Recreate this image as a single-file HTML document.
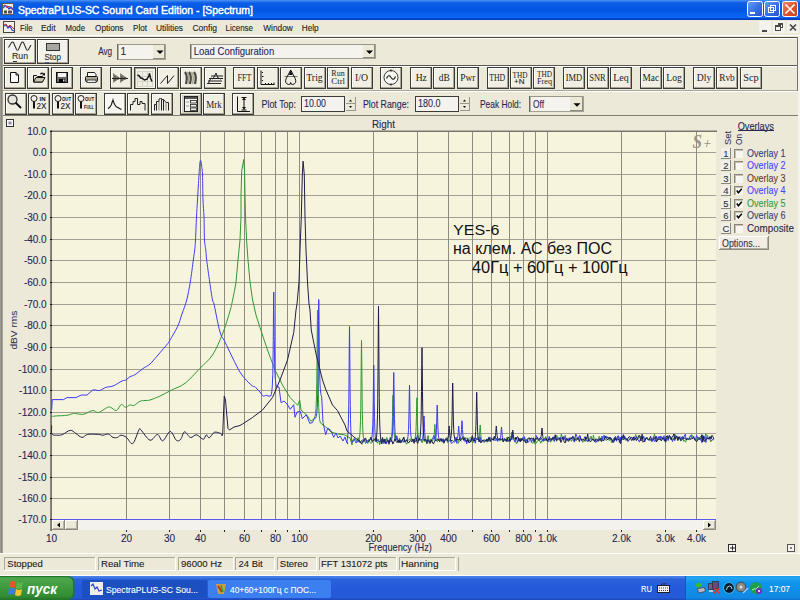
<!DOCTYPE html>
<html><head><meta charset="utf-8"><title>SpectraPLUS</title>
<style>html,body{margin:0;padding:0;width:800px;height:600px;overflow:hidden;background:#ECE9D8}svg{display:block}</style>
</head><body>
<svg width="800" height="600" viewBox="0 0 800 600" shape-rendering="auto">
<rect x="0" y="0" width="800" height="600" fill="#ECE9D8" />
<defs>
<linearGradient id="tg" x1="0" y1="0" x2="0" y2="20" gradientUnits="userSpaceOnUse">
<stop offset="0" stop-color="#4A95F5"/><stop offset="0.08" stop-color="#2A74EC"/>
<stop offset="0.15" stop-color="#0A5DE6"/><stop offset="0.55" stop-color="#0256E2"/>
<stop offset="0.7" stop-color="#0861EE"/><stop offset="0.88" stop-color="#0B66F3"/>
<stop offset="0.92" stop-color="#0047CF"/><stop offset="1" stop-color="#003BBE"/>
</linearGradient>
<linearGradient id="btnb" x1="0" y1="0" x2="1" y2="1">
<stop offset="0" stop-color="#6E9CF5"/><stop offset="0.5" stop-color="#3A72E8"/><stop offset="1" stop-color="#2152CC"/>
</linearGradient>
<linearGradient id="btnr" x1="0" y1="0" x2="1" y2="1">
<stop offset="0" stop-color="#F08A6E"/><stop offset="0.5" stop-color="#E0552E"/><stop offset="1" stop-color="#C5401E"/>
</linearGradient>
<linearGradient id="taskg" x1="0" y1="575" x2="0" y2="600" gradientUnits="userSpaceOnUse">
<stop offset="0" stop-color="#3D6ED8"/><stop offset="0.08" stop-color="#4A85EA"/><stop offset="0.16" stop-color="#2C62D9"/>
<stop offset="0.5" stop-color="#245ADB"/><stop offset="0.9" stop-color="#2459D8"/><stop offset="1" stop-color="#1D47B8"/>
</linearGradient>
<linearGradient id="trayg" x1="0" y1="575" x2="0" y2="600" gradientUnits="userSpaceOnUse">
<stop offset="0" stop-color="#1C8FE8"/><stop offset="0.12" stop-color="#23A7F3"/><stop offset="0.3" stop-color="#0F95EC"/>
<stop offset="0.9" stop-color="#1189E4"/><stop offset="1" stop-color="#0C6FCF"/>
</linearGradient>
<linearGradient id="startg" x1="0" y1="575" x2="0" y2="600" gradientUnits="userSpaceOnUse">
<stop offset="0" stop-color="#3A8A3A"/><stop offset="0.15" stop-color="#4FA64C"/><stop offset="0.5" stop-color="#3E9A3C"/>
<stop offset="0.85" stop-color="#338C33"/><stop offset="1" stop-color="#236E24"/>
</linearGradient>
</defs>
<rect x="0" y="0" width="800" height="20" fill="url(#tg)" />
<rect x="2" y="3" width="12" height="12" fill="#F4F2EA" />
<rect x="2.5" y="3.5" width="11" height="11" fill="none" stroke="#5A5A5A" stroke-width="1"/>
<polyline points="3,6 5,5 7,8 9,6 11,9 13,8" fill="none" stroke="#D03030" stroke-width="1"/>
<polyline points="3,8 5,6 7,6 9,9 11,7 13,10" fill="none" stroke="#3040E0" stroke-width="1.2"/>
<rect x="4" y="10.5" width="3" height="3" fill="#505050" />
<rect x="8" y="10.5" width="4" height="3" fill="#505050" />
<text x="18" y="14" font-family="Liberation Sans" font-size="11.3" fill="#FFFFFF" stroke="#FFFFFF" stroke-width="0.45" textLength="235" lengthAdjust="spacingAndGlyphs">SpectraPLUS-SC Sound Card Edition - [Spectrum]</text>
<rect x="747.5" y="1.5" width="15" height="15" rx="2" ry="2" fill="url(#btnb)" stroke="#FFFFFF" stroke-width="1"/>
<rect x="764.5" y="1.5" width="15" height="15" rx="2" ry="2" fill="url(#btnb)" stroke="#FFFFFF" stroke-width="1"/>
<rect x="782.5" y="1.5" width="15" height="15" rx="2" ry="2" fill="url(#btnr)" stroke="#FFFFFF" stroke-width="1"/>
<rect x="750" y="12" width="5" height="2" fill="#FFFFFF" />
<rect x="768.5" y="7.5" width="5" height="5" fill="none" stroke="#fff" stroke-width="1"/>
<rect x="770.5" y="5.5" width="5" height="5" fill="none" stroke="#fff" stroke-width="1"/>
<path d="M785.5,4.5 L794.5,13.5 M794.5,4.5 L785.5,13.5" stroke="#fff" stroke-width="1.6"/>
<rect x="3" y="21" width="12" height="12" fill="#F4F2EA" />
<rect x="3.5" y="21.5" width="11" height="11" fill="none" stroke="#444" stroke-width="1"/>
<polyline points="4,26 6,25 8,28 10,26 12,30 14,31" fill="none" stroke="#3040D0" stroke-width="1.2"/>
<polyline points="4,25 6,24 8,27 10,25 12,27 14,29" fill="none" stroke="#D03030" stroke-width="1"/>
<text x="20" y="30.5" font-family="Liberation Sans" font-size="9" fill="#202020" font-weight="normal" text-anchor="start" textLength="12.5" lengthAdjust="spacingAndGlyphs" stroke="#202020" stroke-width="0.1" >File</text>
<text x="41" y="30.5" font-family="Liberation Sans" font-size="9" fill="#202020" font-weight="normal" text-anchor="start" textLength="14.5" lengthAdjust="spacingAndGlyphs" stroke="#202020" stroke-width="0.1" >Edit</text>
<text x="65.5" y="30.5" font-family="Liberation Sans" font-size="9" fill="#202020" font-weight="normal" text-anchor="start" textLength="19.5" lengthAdjust="spacingAndGlyphs" stroke="#202020" stroke-width="0.1" >Mode</text>
<text x="95" y="30.5" font-family="Liberation Sans" font-size="9" fill="#202020" font-weight="normal" text-anchor="start" textLength="28.5" lengthAdjust="spacingAndGlyphs" stroke="#202020" stroke-width="0.1" >Options</text>
<text x="133" y="30.5" font-family="Liberation Sans" font-size="9" fill="#202020" font-weight="normal" text-anchor="start" textLength="14" lengthAdjust="spacingAndGlyphs" stroke="#202020" stroke-width="0.1" >Plot</text>
<text x="156" y="30.5" font-family="Liberation Sans" font-size="9" fill="#202020" font-weight="normal" text-anchor="start" textLength="27" lengthAdjust="spacingAndGlyphs" stroke="#202020" stroke-width="0.1" >Utilities</text>
<text x="192.5" y="30.5" font-family="Liberation Sans" font-size="9" fill="#202020" font-weight="normal" text-anchor="start" textLength="24.5" lengthAdjust="spacingAndGlyphs" stroke="#202020" stroke-width="0.1" >Config</text>
<text x="225.5" y="30.5" font-family="Liberation Sans" font-size="9" fill="#202020" font-weight="normal" text-anchor="start" textLength="27.5" lengthAdjust="spacingAndGlyphs" stroke="#202020" stroke-width="0.1" >License</text>
<text x="263.3" y="30.5" font-family="Liberation Sans" font-size="9" fill="#202020" font-weight="normal" text-anchor="start" textLength="29.5" lengthAdjust="spacingAndGlyphs" stroke="#202020" stroke-width="0.1" >Window</text>
<text x="301.7" y="30.5" font-family="Liberation Sans" font-size="9" fill="#202020" font-weight="normal" text-anchor="start" textLength="17" lengthAdjust="spacingAndGlyphs" stroke="#202020" stroke-width="0.1" >Help</text>
<rect x="759" y="21" width="12" height="12" fill="#F3F2EC" />
<rect x="773" y="21" width="12" height="12" fill="#F3F2EC" />
<rect x="787" y="21" width="12" height="12" fill="#F3F2EC" />
<rect x="762" y="30" width="5" height="2" fill="#4A4A48" />
<rect x="778.5" y="23.5" width="4" height="4" fill="none" stroke="#4A4A48" stroke-width="1"/>
<rect x="778" y="23" width="5" height="2" fill="#4A4A48" />
<rect x="775.5" y="25.5" width="5" height="5" fill="#F3F2EC" stroke="#4A4A48" stroke-width="1"/>
<rect x="775" y="25" width="6" height="2" fill="#4A4A48" />
<path d="M790,24.5 L796,30.5 M796,24.5 L790,30.5" stroke="#4A4A48" stroke-width="1.7"/>
<rect x="0" y="35" width="800" height="1" fill="#FFFFFF" />
<rect x="1" y="37" width="797" height="1" fill="#4E4C44" />
<rect x="797" y="37" width="1" height="54" fill="#77756B" />
<rect x="798" y="37" width="2" height="516" fill="#F4F3EE" />
<rect x="2" y="38" width="795" height="1" fill="#FFFFFF" />
<rect x="2" y="65" width="795" height="1" fill="#5A5850" />
<rect x="2" y="66" width="795" height="1" fill="#FFFFFF" />
<rect x="2" y="90" width="795" height="1" fill="#A8A598" />
<rect x="2" y="91" width="795" height="1" fill="#FFFFFF" />
<rect x="2" y="115" width="796" height="1" fill="#7E7C72" />
<rect x="4" y="39" width="32" height="25" fill="#3A3A36" />
<rect x="5" y="40" width="30" height="23" fill="#A9A597" />
<rect x="5" y="40" width="29" height="22" fill="#FFFFFF" />
<rect x="6" y="41" width="28" height="21" fill="#F3F2EB" />
<path d="M8.5,47.5 L11.5,42.5 Q12.5,41.5 13.5,42.5 L16.5,49.5 Q17.5,51 18.5,49.5 L21.5,42.5 Q22.5,41.5 23.5,42.5 L26.5,49.5 Q27.5,51 28.5,49.5 L31,45" fill="none" stroke="#333" stroke-width="1.1"/>
<text x="12" y="59" font-family="Liberation Sans" font-size="8.8" fill="#2A2A2A" font-weight="normal" text-anchor="start" textLength="16" lengthAdjust="spacingAndGlyphs" stroke="#2A2A2A" stroke-width="0.1" >Run</text>
<rect x="13" y="61" width="4" height="1" fill="#333" />
<rect x="37" y="39" width="32" height="25" fill="#3A3A36" />
<rect x="38" y="40" width="30" height="23" fill="#A9A597" />
<rect x="38" y="40" width="29" height="22" fill="#FFFFFF" />
<rect x="39" y="41" width="28" height="21" fill="#F3F2EB" />
<rect x="46" y="43" width="14" height="8" fill="#A8A6A0" />
<rect x="46.5" y="43.5" width="13" height="7" fill="none" stroke="#333" stroke-width="1"/>
<text x="44.5" y="59.8" font-family="Liberation Sans" font-size="8.8" fill="#2A2A2A" font-weight="normal" text-anchor="start" textLength="16.5" lengthAdjust="spacingAndGlyphs" stroke="#2A2A2A" stroke-width="0.1" >Stop</text>
<rect x="45" y="62" width="4" height="1" fill="#6060A0" />
<text x="98.2" y="55" font-family="Liberation Sans" font-size="10.3" fill="#262650" font-weight="normal" text-anchor="start" textLength="14" lengthAdjust="spacingAndGlyphs" stroke="#262650" stroke-width="0.1" >Avg</text>
<rect x="117" y="44" width="49" height="16" fill="#F4F3EE" />
<rect x="117" y="44" width="49" height="1" fill="#9A978A" />
<rect x="117" y="59" width="49" height="1" fill="#A4A194" />
<rect x="117" y="44" width="1" height="16" fill="#6E6B60" />
<rect x="118" y="45" width="1" height="14" fill="#B4B1A4" />
<rect x="165" y="44" width="1" height="16" fill="#A4A194" />
<rect x="153" y="45" width="12" height="14" fill="#ECE9D8" />
<rect x="153" y="58" width="12" height="1" fill="#8E8B7E" />
<rect x="164" y="45" width="1" height="14" fill="#8E8B7E" />
<path d="M156.5,50.5 h7 l-3.5,3.5 z" fill="#000"/>
<text x="120.5" y="54.8" font-family="Liberation Sans" font-size="10" fill="#262660" font-weight="normal" text-anchor="start" stroke="#262660" stroke-width="0.1" >1</text>
<rect x="190" y="44" width="186" height="15" fill="#F4F3EE" />
<rect x="190" y="44" width="186" height="1" fill="#9A978A" />
<rect x="190" y="58" width="186" height="1" fill="#A4A194" />
<rect x="190" y="44" width="1" height="15" fill="#6E6B60" />
<rect x="191" y="45" width="1" height="13" fill="#B4B1A4" />
<rect x="375" y="44" width="1" height="15" fill="#A4A194" />
<rect x="363" y="45" width="12" height="13" fill="#ECE9D8" />
<rect x="363" y="57" width="12" height="1" fill="#8E8B7E" />
<rect x="374" y="45" width="1" height="13" fill="#8E8B7E" />
<path d="M366.0,50.5 h7 l-3.5,3.5 z" fill="#000"/>
<text x="193.7" y="55" font-family="Liberation Sans" font-size="10.3" fill="#262660" font-weight="normal" text-anchor="start" textLength="80.5" lengthAdjust="spacingAndGlyphs" stroke="#262660" stroke-width="0.1" >Load Configuration</text>
<rect x="4" y="67" width="22" height="22" fill="#3A3A36" />
<rect x="5" y="68" width="20" height="20" fill="#A9A597" />
<rect x="5" y="68" width="19" height="19" fill="#FFFFFF" />
<rect x="6" y="69" width="18" height="18" fill="#F1EFE4" />
<rect x="27" y="67" width="22" height="22" fill="#3A3A36" />
<rect x="28" y="68" width="20" height="20" fill="#A9A597" />
<rect x="28" y="68" width="19" height="19" fill="#FFFFFF" />
<rect x="29" y="69" width="18" height="18" fill="#F1EFE4" />
<rect x="51" y="67" width="22" height="22" fill="#3A3A36" />
<rect x="52" y="68" width="20" height="20" fill="#A9A597" />
<rect x="52" y="68" width="19" height="19" fill="#FFFFFF" />
<rect x="53" y="69" width="18" height="18" fill="#F1EFE4" />
<rect x="80" y="67" width="22" height="22" fill="#3A3A36" />
<rect x="81" y="68" width="20" height="20" fill="#A9A597" />
<rect x="81" y="68" width="19" height="19" fill="#FFFFFF" />
<rect x="82" y="69" width="18" height="18" fill="#F1EFE4" />
<rect x="110" y="67" width="22" height="22" fill="#3A3A36" />
<rect x="111" y="68" width="20" height="20" fill="#A9A597" />
<rect x="111" y="68" width="19" height="19" fill="#FFFFFF" />
<rect x="112" y="69" width="18" height="18" fill="#F1EFE4" />
<rect x="134" y="67" width="22" height="22" fill="#3A3A36" />
<rect x="135" y="68" width="20" height="20" fill="#A9A597" />
<rect x="135" y="68" width="19" height="19" fill="#FFFFFF" />
<rect x="136" y="69" width="18" height="18" fill="#F1EFE4" />
<rect x="157" y="67" width="22" height="22" fill="#3A3A36" />
<rect x="158" y="68" width="20" height="20" fill="#A9A597" />
<rect x="158" y="68" width="19" height="19" fill="#FFFFFF" />
<rect x="159" y="69" width="18" height="18" fill="#F1EFE4" />
<rect x="180" y="67" width="22" height="22" fill="#3A3A36" />
<rect x="181" y="68" width="20" height="20" fill="#A9A597" />
<rect x="181" y="68" width="19" height="19" fill="#FFFFFF" />
<rect x="182" y="69" width="18" height="18" fill="#F1EFE4" />
<rect x="204" y="67" width="22" height="22" fill="#3A3A36" />
<rect x="205" y="68" width="20" height="20" fill="#A9A597" />
<rect x="205" y="68" width="19" height="19" fill="#FFFFFF" />
<rect x="206" y="69" width="18" height="18" fill="#F1EFE4" />
<rect x="233" y="67" width="22" height="22" fill="#3A3A36" />
<rect x="234" y="68" width="20" height="20" fill="#A9A597" />
<rect x="234" y="68" width="19" height="19" fill="#FFFFFF" />
<rect x="235" y="69" width="18" height="18" fill="#F1EFE4" />
<rect x="257" y="67" width="22" height="22" fill="#3A3A36" />
<rect x="258" y="68" width="20" height="20" fill="#A9A597" />
<rect x="258" y="68" width="19" height="19" fill="#FFFFFF" />
<rect x="259" y="69" width="18" height="18" fill="#F1EFE4" />
<rect x="280" y="67" width="22" height="22" fill="#3A3A36" />
<rect x="281" y="68" width="20" height="20" fill="#A9A597" />
<rect x="281" y="68" width="19" height="19" fill="#FFFFFF" />
<rect x="282" y="69" width="18" height="18" fill="#F1EFE4" />
<rect x="304" y="67" width="22" height="22" fill="#3A3A36" />
<rect x="305" y="68" width="20" height="20" fill="#A9A597" />
<rect x="305" y="68" width="19" height="19" fill="#FFFFFF" />
<rect x="306" y="69" width="18" height="18" fill="#F1EFE4" />
<rect x="327" y="67" width="22" height="22" fill="#3A3A36" />
<rect x="328" y="68" width="20" height="20" fill="#A9A597" />
<rect x="328" y="68" width="19" height="19" fill="#FFFFFF" />
<rect x="329" y="69" width="18" height="18" fill="#F1EFE4" />
<rect x="351" y="67" width="22" height="22" fill="#3A3A36" />
<rect x="352" y="68" width="20" height="20" fill="#A9A597" />
<rect x="352" y="68" width="19" height="19" fill="#FFFFFF" />
<rect x="353" y="69" width="18" height="18" fill="#F1EFE4" />
<rect x="380" y="67" width="22" height="22" fill="#3A3A36" />
<rect x="381" y="68" width="20" height="20" fill="#A9A597" />
<rect x="381" y="68" width="19" height="19" fill="#FFFFFF" />
<rect x="382" y="69" width="18" height="18" fill="#F1EFE4" />
<rect x="410" y="67" width="22" height="22" fill="#3A3A36" />
<rect x="411" y="68" width="20" height="20" fill="#A9A597" />
<rect x="411" y="68" width="19" height="19" fill="#FFFFFF" />
<rect x="412" y="69" width="18" height="18" fill="#F1EFE4" />
<rect x="433" y="67" width="22" height="22" fill="#3A3A36" />
<rect x="434" y="68" width="20" height="20" fill="#A9A597" />
<rect x="434" y="68" width="19" height="19" fill="#FFFFFF" />
<rect x="435" y="69" width="18" height="18" fill="#F1EFE4" />
<rect x="457" y="67" width="22" height="22" fill="#3A3A36" />
<rect x="458" y="68" width="20" height="20" fill="#A9A597" />
<rect x="458" y="68" width="19" height="19" fill="#FFFFFF" />
<rect x="459" y="69" width="18" height="18" fill="#F1EFE4" />
<rect x="487" y="67" width="22" height="22" fill="#3A3A36" />
<rect x="488" y="68" width="20" height="20" fill="#A9A597" />
<rect x="488" y="68" width="19" height="19" fill="#FFFFFF" />
<rect x="489" y="69" width="18" height="18" fill="#F1EFE4" />
<rect x="510" y="67" width="22" height="22" fill="#3A3A36" />
<rect x="511" y="68" width="20" height="20" fill="#A9A597" />
<rect x="511" y="68" width="19" height="19" fill="#FFFFFF" />
<rect x="512" y="69" width="18" height="18" fill="#F1EFE4" />
<rect x="533" y="67" width="22" height="22" fill="#3A3A36" />
<rect x="534" y="68" width="20" height="20" fill="#A9A597" />
<rect x="534" y="68" width="19" height="19" fill="#FFFFFF" />
<rect x="535" y="69" width="18" height="18" fill="#F1EFE4" />
<rect x="563" y="67" width="22" height="22" fill="#3A3A36" />
<rect x="564" y="68" width="20" height="20" fill="#A9A597" />
<rect x="564" y="68" width="19" height="19" fill="#FFFFFF" />
<rect x="565" y="69" width="18" height="18" fill="#F1EFE4" />
<rect x="587" y="67" width="22" height="22" fill="#3A3A36" />
<rect x="588" y="68" width="20" height="20" fill="#A9A597" />
<rect x="588" y="68" width="19" height="19" fill="#FFFFFF" />
<rect x="589" y="69" width="18" height="18" fill="#F1EFE4" />
<rect x="610" y="67" width="22" height="22" fill="#3A3A36" />
<rect x="611" y="68" width="20" height="20" fill="#A9A597" />
<rect x="611" y="68" width="19" height="19" fill="#FFFFFF" />
<rect x="612" y="69" width="18" height="18" fill="#F1EFE4" />
<rect x="640" y="67" width="22" height="22" fill="#3A3A36" />
<rect x="641" y="68" width="20" height="20" fill="#A9A597" />
<rect x="641" y="68" width="19" height="19" fill="#FFFFFF" />
<rect x="642" y="69" width="18" height="18" fill="#F1EFE4" />
<rect x="663" y="67" width="22" height="22" fill="#3A3A36" />
<rect x="664" y="68" width="20" height="20" fill="#A9A597" />
<rect x="664" y="68" width="19" height="19" fill="#FFFFFF" />
<rect x="665" y="69" width="18" height="18" fill="#F1EFE4" />
<rect x="693" y="67" width="22" height="22" fill="#3A3A36" />
<rect x="694" y="68" width="20" height="20" fill="#A9A597" />
<rect x="694" y="68" width="19" height="19" fill="#FFFFFF" />
<rect x="695" y="69" width="18" height="18" fill="#F1EFE4" />
<rect x="716" y="67" width="22" height="22" fill="#3A3A36" />
<rect x="717" y="68" width="20" height="20" fill="#A9A597" />
<rect x="717" y="68" width="19" height="19" fill="#FFFFFF" />
<rect x="718" y="69" width="18" height="18" fill="#F1EFE4" />
<rect x="740" y="67" width="22" height="22" fill="#3A3A36" />
<rect x="741" y="68" width="20" height="20" fill="#A9A597" />
<rect x="741" y="68" width="19" height="19" fill="#FFFFFF" />
<rect x="742" y="69" width="18" height="18" fill="#F1EFE4" />
<rect x="5" y="93" width="22" height="22" fill="#3A3A36" />
<rect x="6" y="94" width="20" height="20" fill="#A9A597" />
<rect x="6" y="94" width="19" height="19" fill="#FFFFFF" />
<rect x="7" y="95" width="18" height="18" fill="#F1EFE4" />
<rect x="28" y="93" width="22" height="22" fill="#3A3A36" />
<rect x="29" y="94" width="20" height="20" fill="#A9A597" />
<rect x="29" y="94" width="19" height="19" fill="#FFFFFF" />
<rect x="30" y="95" width="18" height="18" fill="#F1EFE4" />
<rect x="52" y="93" width="22" height="22" fill="#3A3A36" />
<rect x="53" y="94" width="20" height="20" fill="#A9A597" />
<rect x="53" y="94" width="19" height="19" fill="#FFFFFF" />
<rect x="54" y="95" width="18" height="18" fill="#F1EFE4" />
<rect x="75" y="93" width="22" height="22" fill="#3A3A36" />
<rect x="76" y="94" width="20" height="20" fill="#A9A597" />
<rect x="76" y="94" width="19" height="19" fill="#FFFFFF" />
<rect x="77" y="95" width="18" height="18" fill="#F1EFE4" />
<rect x="104" y="93" width="22" height="22" fill="#3A3A36" />
<rect x="105" y="94" width="20" height="20" fill="#A9A597" />
<rect x="105" y="94" width="19" height="19" fill="#FFFFFF" />
<rect x="106" y="95" width="18" height="18" fill="#F1EFE4" />
<rect x="127" y="93" width="22" height="22" fill="#3A3A36" />
<rect x="128" y="94" width="20" height="20" fill="#A9A597" />
<rect x="128" y="94" width="19" height="19" fill="#FFFFFF" />
<rect x="129" y="95" width="18" height="18" fill="#F1EFE4" />
<rect x="151" y="93" width="22" height="22" fill="#3A3A36" />
<rect x="152" y="94" width="20" height="20" fill="#A9A597" />
<rect x="152" y="94" width="19" height="19" fill="#FFFFFF" />
<rect x="153" y="95" width="18" height="18" fill="#F1EFE4" />
<rect x="180" y="93" width="22" height="22" fill="#3A3A36" />
<rect x="181" y="94" width="20" height="20" fill="#A9A597" />
<rect x="181" y="94" width="19" height="19" fill="#FFFFFF" />
<rect x="182" y="95" width="18" height="18" fill="#F1EFE4" />
<rect x="203" y="93" width="22" height="22" fill="#3A3A36" />
<rect x="204" y="94" width="20" height="20" fill="#A9A597" />
<rect x="204" y="94" width="19" height="19" fill="#FFFFFF" />
<rect x="205" y="95" width="18" height="18" fill="#F1EFE4" />
<rect x="232" y="93" width="22" height="22" fill="#3A3A36" />
<rect x="233" y="94" width="20" height="20" fill="#A9A597" />
<rect x="233" y="94" width="19" height="19" fill="#FFFFFF" />
<rect x="234" y="95" width="18" height="18" fill="#F1EFE4" />
<path d="M10.5,72.5 h5.5 l2.5,2.5 v7.5 h-8 z" fill="#FAFAF6" stroke="#111" stroke-width="1"/>
<path d="M16,72.5 v2.5 h2.5" fill="none" stroke="#111" stroke-width="1"/>
<path d="M33.5,75.5 h3 l1,1 h5 v5.5 h-9 z" fill="#E6E2CC" stroke="#111" stroke-width="1"/>
<path d="M33.5,82 l2.5,-4.5 h9 l-2.5,4.5 z" fill="#C9C5AE" stroke="#111" stroke-width="1"/>
<path d="M40,73.5 q2,-2 4,0 l1,-1 v3 h-3 l1,-1 q-1.5,-1 -3,0" fill="#222"/>
<rect x="56.5" y="72.5" width="11" height="10" fill="#666" stroke="#111" stroke-width="1"/>
<rect x="58" y="73" width="8" height="4" fill="#F4F4F0"/>
<rect x="59" y="79" width="6" height="3.5" fill="#000"/><rect x="63" y="79.5" width="1.5" height="2" fill="#ddd"/>
<path d="M87.5,72.5 h7 l1.5,2 v2 h-8.5 z" fill="#F8F8F4" stroke="#222" stroke-width="1"/>
<rect x="85.5" y="76.5" width="12" height="5" rx="1" fill="#A8A498" stroke="#111" stroke-width="1"/>
<rect x="87" y="80" width="9" height="2.5" fill="#F4F4F0" stroke="#222" stroke-width="0.8"/>
<path d="M113,73 l7,5 l-7,5 z M120,73 l7,5 l-7,5 z" fill="#858275"/>
<path d="M112,78.5 h16" stroke="#222" stroke-width="1"/>
<path d="M115,76 v5 M118,77 v3 M122,76 v5 M125,77 v3" stroke="#333" stroke-width="0.8"/>
<rect x="135" y="68" width="20" height="20" fill="#F2F1EA" />
<rect x="135" y="68" width="20" height="1" fill="#A8A598" />
<rect x="135" y="68" width="1" height="20" fill="#A8A598" />
<rect x="137" y="71" width="16" height="16" fill="#D6D3C6" />
<rect x="138" y="72" width="4" height="4" fill="#F0EFE6" />
<rect x="138" y="77" width="4" height="4" fill="#F0EFE6" />
<rect x="138" y="82" width="4" height="4" fill="#F0EFE6" />
<rect x="143" y="72" width="4" height="4" fill="#F0EFE6" />
<rect x="143" y="77" width="4" height="4" fill="#F0EFE6" />
<rect x="143" y="82" width="4" height="4" fill="#F0EFE6" />
<rect x="148" y="72" width="4" height="4" fill="#F0EFE6" />
<rect x="148" y="77" width="4" height="4" fill="#F0EFE6" />
<rect x="148" y="82" width="4" height="4" fill="#F0EFE6" />
<path d="M137.5,75 L139.5,76 L140.3,77.8 L142,78.2 L144.5,80 L147,79.2 L148.8,76 L149.5,73.5 L150.5,78 L152,81.5" fill="none" stroke="#111" stroke-width="1.4"/>
<path d="M160.5,83.5 l7,-8 v8 l6.5,-8" fill="none" stroke="#222" stroke-width="1"/>
<path d="M185,72 q3,4 1,12 M189,72 q3,4 1,12 M194,72 q3,4 1,12" fill="none" stroke="#4A4840" stroke-width="2.2"/>
<path d="M187,72 q3,4 1,12 M191.5,72 q3,4 1,12" fill="none" stroke="#A9A697" stroke-width="1.5"/>
<path d="M209,78.5 h14 M208,81 h14 M207,83.5 h14 M211,76 h12" stroke="#222" stroke-width="1.2"/>
<path d="M208,84 l3,-6 l2,1 l3,-6 l2,5 l3,1" fill="none" stroke="#222" stroke-width="1"/>
<text x="244.5" y="80.8" font-family="Liberation Serif" font-size="9.5" fill="#1A1A1A" font-weight="normal" text-anchor="middle" textLength="14" lengthAdjust="spacingAndGlyphs" >FFT</text>
<path d="M261,70.5 v14 h13.5" fill="none" stroke="#111" stroke-width="1"/>
<path d="M262,72.5 h1 M262,76.5 h1.5 M262,80.5 h1 M265.5,83 v1 M268.5,83 v1 M271.5,83 v1 M274,82.5 v2" stroke="#111" stroke-width="1"/>
<path d="M284.5,76.5 h13" stroke="#777" stroke-width="1"/>
<path d="M290.7,70 l-4.5,8.5 q-2,5 2.5,6 q2,0.3 2,-2 q0,2.3 2,2 q4.5,-1 2.5,-6 z" fill="none" stroke="#111" stroke-width="1"/>
<path d="M290.7,70 l-1.8,5 h3.6 z" fill="#111"/>
<text x="314.5" y="80.6" font-family="Liberation Serif" font-size="10" fill="#1A1A1A" font-weight="normal" text-anchor="middle" textLength="16.6" lengthAdjust="spacingAndGlyphs" >Trig</text>
<text x="338" y="75.9" font-family="Liberation Serif" font-size="8.5" fill="#1A1A1A" font-weight="normal" text-anchor="middle" textLength="13.3" lengthAdjust="spacingAndGlyphs" >Run</text>
<text x="338.2" y="84" font-family="Liberation Serif" font-size="8.5" fill="#1A1A1A" font-weight="normal" text-anchor="middle" textLength="13.7" lengthAdjust="spacingAndGlyphs" >Ctrl</text>
<text x="361.5" y="80.5" font-family="Liberation Serif" font-size="10" fill="#1A1A1A" font-weight="normal" text-anchor="middle" textLength="13" lengthAdjust="spacingAndGlyphs" >I/O</text>
<circle cx="391" cy="77.5" r="7" fill="#F8F8F4" stroke="#3A3A36" stroke-width="1"/>
<path d="M386.5,78.5 q2,-5 4.5,-1 q2.5,4 4.5,-1" fill="none" stroke="#222" stroke-width="1.2"/>
<path d="M391,69.5 v2 M391,83.5 v2" stroke="#333" stroke-width="1.5"/>
<text x="421.3" y="80.6" font-family="Liberation Serif" font-size="10" fill="#1A1A1A" font-weight="normal" text-anchor="middle" textLength="11.2" lengthAdjust="spacingAndGlyphs" >Hz</text>
<text x="444.2" y="80.6" font-family="Liberation Serif" font-size="10" fill="#1A1A1A" font-weight="normal" text-anchor="middle" textLength="11" lengthAdjust="spacingAndGlyphs" >dB</text>
<text x="467.8" y="80.6" font-family="Liberation Serif" font-size="10" fill="#1A1A1A" font-weight="normal" text-anchor="middle" textLength="15" lengthAdjust="spacingAndGlyphs" >Pwr</text>
<text x="497.2" y="80.9" font-family="Liberation Serif" font-size="9.5" fill="#1A1A1A" font-weight="normal" text-anchor="middle" textLength="16" lengthAdjust="spacingAndGlyphs" >THD</text>
<text x="520.1" y="77.6" font-family="Liberation Serif" font-size="8.5" fill="#1A1A1A" font-weight="normal" text-anchor="middle" textLength="15" lengthAdjust="spacingAndGlyphs" >THD</text>
<text x="519.2" y="84.2" font-family="Liberation Sans" font-size="6.5" fill="#1A1A1A" font-weight="normal" text-anchor="middle" textLength="10.4" lengthAdjust="spacingAndGlyphs" stroke="#1A1A1A" stroke-width="0.1" >+N</text>
<text x="544.5" y="77.1" font-family="Liberation Serif" font-size="8.5" fill="#1A1A1A" font-weight="normal" text-anchor="middle" textLength="15" lengthAdjust="spacingAndGlyphs" >THD</text>
<text x="544.5" y="84.2" font-family="Liberation Serif" font-size="7.5" fill="#1A1A1A" font-weight="normal" text-anchor="middle" textLength="15" lengthAdjust="spacingAndGlyphs" >Freq</text>
<text x="574" y="80.8" font-family="Liberation Serif" font-size="9.5" fill="#1A1A1A" font-weight="normal" text-anchor="middle" textLength="16.5" lengthAdjust="spacingAndGlyphs" >IMD</text>
<text x="597.5" y="80.8" font-family="Liberation Serif" font-size="9.5" fill="#1A1A1A" font-weight="normal" text-anchor="middle" textLength="16.5" lengthAdjust="spacingAndGlyphs" >SNR</text>
<text x="621" y="80.8" font-family="Liberation Serif" font-size="10" fill="#1A1A1A" font-weight="normal" text-anchor="middle" textLength="15.5" lengthAdjust="spacingAndGlyphs" >Leq</text>
<text x="650.8" y="80.8" font-family="Liberation Serif" font-size="10" fill="#1A1A1A" font-weight="normal" text-anchor="middle" textLength="16.5" lengthAdjust="spacingAndGlyphs" >Mac</text>
<text x="674" y="80.8" font-family="Liberation Serif" font-size="10" fill="#1A1A1A" font-weight="normal" text-anchor="middle" textLength="15.5" lengthAdjust="spacingAndGlyphs" >Log</text>
<text x="704" y="80.8" font-family="Liberation Serif" font-size="10" fill="#1A1A1A" font-weight="normal" text-anchor="middle" textLength="14.5" lengthAdjust="spacingAndGlyphs" >Dly</text>
<text x="727" y="80.8" font-family="Liberation Serif" font-size="10" fill="#1A1A1A" font-weight="normal" text-anchor="middle" textLength="15.5" lengthAdjust="spacingAndGlyphs" >Rvb</text>
<text x="751" y="80.8" font-family="Liberation Serif" font-size="10" fill="#1A1A1A" font-weight="normal" text-anchor="middle" textLength="15.5" lengthAdjust="spacingAndGlyphs" >Scp</text>
<circle cx="12.5" cy="99.5" r="4.5" fill="#E8E6DC" stroke="#333" stroke-width="1.3"/>
<path d="M15.5,102.5 l5.5,5.5" stroke="#111" stroke-width="2"/>
<circle cx="34" cy="98.5" r="3" fill="#F4F2EA" stroke="#222" stroke-width="1"/>
<path d="M34,101.5 v7" stroke="#111" stroke-width="2"/>
<text x="42.5" y="101.3" font-family="Liberation Sans" font-size="5.5" fill="#111" font-weight="bold" text-anchor="middle" textLength="6" lengthAdjust="spacingAndGlyphs" >IN</text>
<text x="41.5" y="109" font-family="Liberation Sans" font-size="8.5" fill="#222" font-weight="normal" text-anchor="middle" textLength="10" lengthAdjust="spacingAndGlyphs" stroke="#222" stroke-width="0.1" >2X</text>
<circle cx="58" cy="98.5" r="3" fill="#F4F2EA" stroke="#222" stroke-width="1"/>
<path d="M58,101.5 v7" stroke="#111" stroke-width="2"/>
<text x="66.5" y="101.3" font-family="Liberation Sans" font-size="5.5" fill="#111" font-weight="bold" text-anchor="middle" textLength="9" lengthAdjust="spacingAndGlyphs" >OUT</text>
<text x="65.5" y="109" font-family="Liberation Sans" font-size="8.5" fill="#222" font-weight="normal" text-anchor="middle" textLength="10" lengthAdjust="spacingAndGlyphs" stroke="#222" stroke-width="0.1" >2X</text>
<circle cx="81" cy="98.5" r="3" fill="#F4F2EA" stroke="#222" stroke-width="1"/>
<path d="M81,101.5 v7" stroke="#111" stroke-width="2"/>
<text x="89.5" y="101.3" font-family="Liberation Sans" font-size="5.5" fill="#111" font-weight="bold" text-anchor="middle" textLength="9" lengthAdjust="spacingAndGlyphs" >OUT</text>
<text x="89" y="108.5" font-family="Liberation Sans" font-size="6" fill="#111" font-weight="bold" text-anchor="middle" textLength="10" lengthAdjust="spacingAndGlyphs" >FULL</text>
<rect x="106" y="95" width="18" height="18" fill="#F7F6F0" />
<path d="M108,108.5 L109.5,107.5 L110.5,106 L111.5,104.5 L112,102.5 L113,100 L114,103 L115,105 L116.5,107 L118,107.5 L119.5,108.5 L121.5,109.5" fill="none" stroke="#111" stroke-width="1.1"/>
<path d="M112.8,98.5 v2" stroke="#888" stroke-width="1"/>
<path d="M130.5,110.5 v-6 h2.5 v-3 h2 v-3 h2.5 v6 h2.5 v-3 h2 v2 h3 v7" fill="none" stroke="#222" stroke-width="1"/>
<path d="M154.5,110.5 v-6 h2 v-3 h2.5 v-2.5 l1.5,-0.5 h1 v1 h2 l2.5,3 h2.5 v8" fill="none" stroke="#222" stroke-width="1"/>
<path d="M156.5,104.5 v6 M161.5,99.5 v11 M163.5,99.5 v11" stroke="#222" stroke-width="1"/>
<path d="M159,101.5 v9 M166,102.5 v8" stroke="#8A887E" stroke-width="1"/>
<rect x="182" y="95" width="18" height="18" fill="#D4D0C2" />
<rect x="184.5" y="96.5" width="13" height="15" fill="#F4F4EE" stroke="#222" stroke-width="1"/>
<rect x="185" y="97" width="12" height="2" fill="#555"/>
<rect x="190.5" y="100.5" width="6" height="2.5" fill="none" stroke="#222" stroke-width="0.8"/>
<rect x="190.5" y="104.5" width="6" height="2.5" fill="none" stroke="#222" stroke-width="0.8"/>
<rect x="190.5" y="108" width="6" height="2.5" fill="none" stroke="#222" stroke-width="0.8"/>
<path d="M186,102 h3 M186,106 h3" stroke="#888" stroke-width="0.8"/>
<text x="214" y="107.8" font-family="Liberation Serif" font-size="10" fill="#1A1A1A" font-weight="normal" text-anchor="middle" textLength="15.5" lengthAdjust="spacingAndGlyphs" >Mrk</text>
<path d="M237.5,96.5 v15 h12.5" fill="none" stroke="#111" stroke-width="1"/>
<path d="M241.5,97.5 h5 M241.5,110 h5 M244,98 v11.5" stroke="#111" stroke-width="1"/>
<path d="M244,97.5 l-2,2.5 h4 z M244,109.5 l-2,-2.5 h4 z" fill="#111"/>
<text x="261.5" y="107.6" font-family="Liberation Sans" font-size="10.3" fill="#262650" font-weight="normal" text-anchor="start" textLength="34.5" lengthAdjust="spacingAndGlyphs" stroke="#262650" stroke-width="0.1" >Plot Top:</text>
<rect x="301" y="96" width="44" height="16" fill="#3C3C3C" />
<rect x="302" y="97" width="42" height="14" fill="#F4F3EE" />
<text x="304" y="106.7" font-family="Liberation Sans" font-size="10" fill="#262660" font-weight="normal" text-anchor="start" textLength="22" lengthAdjust="spacingAndGlyphs" stroke="#262660" stroke-width="0.1" >10.00</text>
<rect x="346" y="97" width="10" height="7" fill="#ECE9D8" />
<rect x="346" y="103" width="10" height="1" fill="#9A978A" />
<rect x="355" y="97" width="1" height="7" fill="#9A978A" />
<path d="M349,101.5 h3 l-1.5,-2 z" fill="#111"/>
<rect x="346" y="104" width="10" height="7" fill="#ECE9D8" />
<rect x="346" y="110" width="10" height="1" fill="#9A978A" />
<rect x="355" y="104" width="1" height="7" fill="#9A978A" />
<path d="M349,106 h3 l-1.5,2 z" fill="#111"/>
<text x="363" y="107.6" font-family="Liberation Sans" font-size="10.3" fill="#262650" font-weight="normal" text-anchor="start" textLength="46" lengthAdjust="spacingAndGlyphs" stroke="#262650" stroke-width="0.1" >Plot Range:</text>
<rect x="415" y="96" width="44" height="16" fill="#3C3C3C" />
<rect x="416" y="97" width="42" height="14" fill="#F4F3EE" />
<text x="418" y="106.7" font-family="Liberation Sans" font-size="10" fill="#262660" font-weight="normal" text-anchor="start" textLength="22.5" lengthAdjust="spacingAndGlyphs" stroke="#262660" stroke-width="0.1" >180.0</text>
<rect x="460" y="97" width="10" height="7" fill="#ECE9D8" />
<rect x="460" y="103" width="10" height="1" fill="#9A978A" />
<rect x="469" y="97" width="1" height="7" fill="#9A978A" />
<path d="M463,101.5 h3 l-1.5,-2 z" fill="#111"/>
<rect x="460" y="104" width="10" height="7" fill="#ECE9D8" />
<rect x="460" y="110" width="10" height="1" fill="#9A978A" />
<rect x="469" y="104" width="1" height="7" fill="#9A978A" />
<path d="M463,106 h3 l-1.5,2 z" fill="#111"/>
<text x="480" y="107.6" font-family="Liberation Sans" font-size="10.3" fill="#262650" font-weight="normal" text-anchor="start" textLength="41" lengthAdjust="spacingAndGlyphs" stroke="#262650" stroke-width="0.1" >Peak Hold:</text>
<rect x="529" y="96" width="55" height="16" fill="#F4F3EE" />
<rect x="529" y="96" width="55" height="1" fill="#9A978A" />
<rect x="529" y="111" width="55" height="1" fill="#A4A194" />
<rect x="529" y="96" width="1" height="16" fill="#6E6B60" />
<rect x="530" y="97" width="1" height="14" fill="#B4B1A4" />
<rect x="583" y="96" width="1" height="16" fill="#A4A194" />
<rect x="570" y="97" width="13" height="14" fill="#ECE9D8" />
<rect x="570" y="110" width="13" height="1" fill="#8E8B7E" />
<rect x="582" y="97" width="1" height="14" fill="#8E8B7E" />
<path d="M573.5,103.2 h7 l-3.5,3.5 z" fill="#000"/>
<text x="533" y="107.6" font-family="Liberation Sans" font-size="10.3" fill="#262660" font-weight="normal" text-anchor="start" textLength="11" lengthAdjust="spacingAndGlyphs" stroke="#262660" stroke-width="0.1" >Off</text>
<rect x="0" y="37" width="1" height="516" fill="#9C9A90" />
<rect x="1" y="37" width="1" height="516" fill="#8A887E" />
<rect x="2" y="37" width="1" height="516" fill="#A4A298" />
<rect x="6.5" y="119.5" width="7" height="7" fill="#F8F8F4" stroke="#333" stroke-width="1"/>
<rect x="8.5" y="121.5" width="3" height="3" fill="#9090B0" />
<text x="383.5" y="128" font-family="Liberation Sans" font-size="10.3" fill="#262650" font-weight="normal" text-anchor="middle" textLength="23" lengthAdjust="spacingAndGlyphs" stroke="#262650" stroke-width="0.1" >Right</text>
<rect x="52" y="132" width="664" height="387" fill="#F7F4DE" />
<rect x="50" y="130" width="667" height="1" fill="#B4B1A4" />
<rect x="50" y="131" width="667" height="1" fill="#77756C" />
<rect x="50" y="130" width="1" height="401" fill="#8C8A80" />
<rect x="51" y="130" width="1" height="401" fill="#7A786F" />
<rect x="52" y="152" width="664" height="1" fill="#A29F92" />
<rect x="52" y="174" width="664" height="1" fill="#A29F92" />
<rect x="52" y="195" width="664" height="1" fill="#A29F92" />
<rect x="52" y="217" width="664" height="1" fill="#A29F92" />
<rect x="52" y="239" width="664" height="1" fill="#A29F92" />
<rect x="52" y="260" width="664" height="1" fill="#A29F92" />
<rect x="52" y="282" width="664" height="1" fill="#A29F92" />
<rect x="52" y="304" width="664" height="1" fill="#A29F92" />
<rect x="52" y="325" width="664" height="1" fill="#A29F92" />
<rect x="52" y="347" width="664" height="1" fill="#A29F92" />
<rect x="52" y="369" width="664" height="1" fill="#A29F92" />
<rect x="52" y="390" width="664" height="1" fill="#A29F92" />
<rect x="52" y="412" width="664" height="1" fill="#A29F92" />
<rect x="52" y="433" width="664" height="1" fill="#A29F92" />
<rect x="52" y="455" width="664" height="1" fill="#A29F92" />
<rect x="52" y="477" width="664" height="1" fill="#A29F92" />
<rect x="52" y="498" width="664" height="1" fill="#A29F92" />
<rect x="126" y="132" width="1" height="387" fill="#8E8C80" />
<rect x="169" y="132" width="1" height="387" fill="#8E8C80" />
<rect x="200" y="132" width="1" height="387" fill="#8E8C80" />
<rect x="224" y="132" width="1" height="387" fill="#8E8C80" />
<rect x="244" y="132" width="1" height="387" fill="#8E8C80" />
<rect x="261" y="132" width="1" height="387" fill="#8E8C80" />
<rect x="275" y="132" width="1" height="387" fill="#8E8C80" />
<rect x="287" y="132" width="1" height="387" fill="#8E8C80" />
<rect x="299" y="132" width="1" height="387" fill="#8E8C80" />
<rect x="373" y="132" width="1" height="387" fill="#8E8C80" />
<rect x="417" y="132" width="1" height="387" fill="#8E8C80" />
<rect x="448" y="132" width="1" height="387" fill="#8E8C80" />
<rect x="472" y="132" width="1" height="387" fill="#8E8C80" />
<rect x="491" y="132" width="1" height="387" fill="#8E8C80" />
<rect x="509" y="132" width="1" height="387" fill="#8E8C80" />
<rect x="523" y="132" width="1" height="387" fill="#8E8C80" />
<rect x="535" y="132" width="1" height="387" fill="#8E8C80" />
<rect x="547" y="132" width="1" height="387" fill="#8E8C80" />
<rect x="621" y="132" width="1" height="387" fill="#8E8C80" />
<rect x="665" y="132" width="1" height="387" fill="#8E8C80" />
<rect x="696" y="132" width="1" height="387" fill="#8E8C80" />
<rect x="52" y="519" width="664" height="1" fill="#5A5AF0" />
<text x="46.7" y="135" font-family="Liberation Sans" font-size="10" fill="#262650" font-weight="normal" text-anchor="end" stroke="#262650" stroke-width="0.1" >10.0</text>
<rect x="50" y="131" width="2" height="1" fill="#111" />
<text x="46.7" y="156" font-family="Liberation Sans" font-size="10" fill="#262650" font-weight="normal" text-anchor="end" stroke="#262650" stroke-width="0.1" >0.0</text>
<rect x="50" y="152" width="2" height="1" fill="#111" />
<text x="46.7" y="178" font-family="Liberation Sans" font-size="10" fill="#262650" font-weight="normal" text-anchor="end" stroke="#262650" stroke-width="0.1" >-10.0</text>
<rect x="50" y="174" width="2" height="1" fill="#111" />
<text x="46.7" y="199" font-family="Liberation Sans" font-size="10" fill="#262650" font-weight="normal" text-anchor="end" stroke="#262650" stroke-width="0.1" >-20.0</text>
<rect x="50" y="195" width="2" height="1" fill="#111" />
<text x="46.7" y="221" font-family="Liberation Sans" font-size="10" fill="#262650" font-weight="normal" text-anchor="end" stroke="#262650" stroke-width="0.1" >-30.0</text>
<rect x="50" y="217" width="2" height="1" fill="#111" />
<text x="46.7" y="243" font-family="Liberation Sans" font-size="10" fill="#262650" font-weight="normal" text-anchor="end" stroke="#262650" stroke-width="0.1" >-40.0</text>
<rect x="50" y="239" width="2" height="1" fill="#111" />
<text x="46.7" y="264" font-family="Liberation Sans" font-size="10" fill="#262650" font-weight="normal" text-anchor="end" stroke="#262650" stroke-width="0.1" >-50.0</text>
<rect x="50" y="260" width="2" height="1" fill="#111" />
<text x="46.7" y="286" font-family="Liberation Sans" font-size="10" fill="#262650" font-weight="normal" text-anchor="end" stroke="#262650" stroke-width="0.1" >-60.0</text>
<rect x="50" y="282" width="2" height="1" fill="#111" />
<text x="46.7" y="308" font-family="Liberation Sans" font-size="10" fill="#262650" font-weight="normal" text-anchor="end" stroke="#262650" stroke-width="0.1" >-70.0</text>
<rect x="50" y="304" width="2" height="1" fill="#111" />
<text x="46.7" y="329" font-family="Liberation Sans" font-size="10" fill="#262650" font-weight="normal" text-anchor="end" stroke="#262650" stroke-width="0.1" >-80.0</text>
<rect x="50" y="325" width="2" height="1" fill="#111" />
<text x="46.7" y="351" font-family="Liberation Sans" font-size="10" fill="#262650" font-weight="normal" text-anchor="end" stroke="#262650" stroke-width="0.1" >-90.0</text>
<rect x="50" y="347" width="2" height="1" fill="#111" />
<text x="46.7" y="373" font-family="Liberation Sans" font-size="10" fill="#262650" font-weight="normal" text-anchor="end" stroke="#262650" stroke-width="0.1" >-100.0</text>
<rect x="50" y="369" width="2" height="1" fill="#111" />
<text x="46.7" y="394" font-family="Liberation Sans" font-size="10" fill="#262650" font-weight="normal" text-anchor="end" stroke="#262650" stroke-width="0.1" >-110.0</text>
<rect x="50" y="390" width="2" height="1" fill="#111" />
<text x="46.7" y="416" font-family="Liberation Sans" font-size="10" fill="#262650" font-weight="normal" text-anchor="end" stroke="#262650" stroke-width="0.1" >-120.0</text>
<rect x="50" y="412" width="2" height="1" fill="#111" />
<text x="46.7" y="437" font-family="Liberation Sans" font-size="10" fill="#262650" font-weight="normal" text-anchor="end" stroke="#262650" stroke-width="0.1" >-130.0</text>
<rect x="50" y="433" width="2" height="1" fill="#111" />
<text x="46.7" y="459" font-family="Liberation Sans" font-size="10" fill="#262650" font-weight="normal" text-anchor="end" stroke="#262650" stroke-width="0.1" >-140.0</text>
<rect x="50" y="455" width="2" height="1" fill="#111" />
<text x="46.7" y="481" font-family="Liberation Sans" font-size="10" fill="#262650" font-weight="normal" text-anchor="end" stroke="#262650" stroke-width="0.1" >-150.0</text>
<rect x="50" y="477" width="2" height="1" fill="#111" />
<text x="46.7" y="502" font-family="Liberation Sans" font-size="10" fill="#262650" font-weight="normal" text-anchor="end" stroke="#262650" stroke-width="0.1" >-160.0</text>
<rect x="50" y="498" width="2" height="1" fill="#111" />
<text x="46.7" y="523" font-family="Liberation Sans" font-size="10" fill="#262650" font-weight="normal" text-anchor="end" stroke="#262650" stroke-width="0.1" >-170.0</text>
<rect x="50" y="519" width="2" height="1" fill="#111" />
<text x="0" y="0" font-family="Liberation Sans" font-size="9.5" fill="#262650" transform="translate(16.6,349.6) rotate(-90)" textLength="39" lengthAdjust="spacingAndGlyphs">dBV rms</text>
<rect x="52" y="520" width="664" height="10" fill="#F3F2EC" />
<rect x="52" y="520" width="13" height="10" fill="#8E8B7E" />
<rect x="52" y="520" width="12" height="9" fill="#FFFFFF" />
<rect x="53" y="521" width="11" height="8" fill="#B5B2A5" />
<rect x="53" y="521" width="10" height="7" fill="#ECE9D8" />
<path d="M60,522.5 v5 l-3,-2.5 z" fill="#000"/>
<rect x="65" y="520" width="13" height="10" fill="#8E8B7E" />
<rect x="65" y="520" width="12" height="9" fill="#FFFFFF" />
<rect x="66" y="521" width="11" height="8" fill="#B5B2A5" />
<rect x="66" y="521" width="10" height="7" fill="#ECE9D8" />
<rect x="703" y="520" width="13" height="10" fill="#8E8B7E" />
<rect x="703" y="520" width="12" height="9" fill="#FFFFFF" />
<rect x="704" y="521" width="11" height="8" fill="#B5B2A5" />
<rect x="704" y="521" width="10" height="7" fill="#ECE9D8" />
<path d="M708,522.5 v5 l3,-2.5 z" fill="#000"/>
<text x="51.5" y="542" font-family="Liberation Sans" font-size="10" fill="#262650" font-weight="normal" text-anchor="middle" stroke="#262650" stroke-width="0.1" >10</text>
<text x="126.5" y="542" font-family="Liberation Sans" font-size="10" fill="#262650" font-weight="normal" text-anchor="middle" stroke="#262650" stroke-width="0.1" >20</text>
<text x="169.5" y="542" font-family="Liberation Sans" font-size="10" fill="#262650" font-weight="normal" text-anchor="middle" stroke="#262650" stroke-width="0.1" >30</text>
<text x="200.5" y="542" font-family="Liberation Sans" font-size="10" fill="#262650" font-weight="normal" text-anchor="middle" stroke="#262650" stroke-width="0.1" >40</text>
<text x="244.5" y="542" font-family="Liberation Sans" font-size="10" fill="#262650" font-weight="normal" text-anchor="middle" stroke="#262650" stroke-width="0.1" >60</text>
<text x="275.5" y="542" font-family="Liberation Sans" font-size="10" fill="#262650" font-weight="normal" text-anchor="middle" stroke="#262650" stroke-width="0.1" >80</text>
<text x="299.5" y="542" font-family="Liberation Sans" font-size="10" fill="#262650" font-weight="normal" text-anchor="middle" stroke="#262650" stroke-width="0.1" >100</text>
<text x="373.5" y="542" font-family="Liberation Sans" font-size="10" fill="#262650" font-weight="normal" text-anchor="middle" stroke="#262650" stroke-width="0.1" >200</text>
<text x="417.5" y="542" font-family="Liberation Sans" font-size="10" fill="#262650" font-weight="normal" text-anchor="middle" stroke="#262650" stroke-width="0.1" >300</text>
<text x="448.5" y="542" font-family="Liberation Sans" font-size="10" fill="#262650" font-weight="normal" text-anchor="middle" stroke="#262650" stroke-width="0.1" >400</text>
<text x="491.5" y="542" font-family="Liberation Sans" font-size="10" fill="#262650" font-weight="normal" text-anchor="middle" stroke="#262650" stroke-width="0.1" >600</text>
<text x="523.5" y="542" font-family="Liberation Sans" font-size="10" fill="#262650" font-weight="normal" text-anchor="middle" stroke="#262650" stroke-width="0.1" >800</text>
<text x="547.5" y="542" font-family="Liberation Sans" font-size="10" fill="#262650" font-weight="normal" text-anchor="middle" stroke="#262650" stroke-width="0.1" >1.0k</text>
<text x="621.5" y="542" font-family="Liberation Sans" font-size="10" fill="#262650" font-weight="normal" text-anchor="middle" stroke="#262650" stroke-width="0.1" >2.0k</text>
<text x="665.5" y="542" font-family="Liberation Sans" font-size="10" fill="#262650" font-weight="normal" text-anchor="middle" stroke="#262650" stroke-width="0.1" >3.0k</text>
<text x="696.5" y="542" font-family="Liberation Sans" font-size="10" fill="#262650" font-weight="normal" text-anchor="middle" stroke="#262650" stroke-width="0.1" >4.0k</text>
<rect x="126" y="530" width="1" height="2" fill="#222" />
<rect x="169" y="530" width="1" height="2" fill="#222" />
<rect x="200" y="530" width="1" height="2" fill="#222" />
<rect x="224" y="530" width="1" height="2" fill="#222" />
<rect x="244" y="530" width="1" height="2" fill="#222" />
<rect x="261" y="530" width="1" height="2" fill="#222" />
<rect x="275" y="530" width="1" height="2" fill="#222" />
<rect x="287" y="530" width="1" height="2" fill="#222" />
<rect x="299" y="530" width="1" height="2" fill="#222" />
<rect x="373" y="530" width="1" height="2" fill="#222" />
<rect x="417" y="530" width="1" height="2" fill="#222" />
<rect x="448" y="530" width="1" height="2" fill="#222" />
<rect x="472" y="530" width="1" height="2" fill="#222" />
<rect x="491" y="530" width="1" height="2" fill="#222" />
<rect x="509" y="530" width="1" height="2" fill="#222" />
<rect x="523" y="530" width="1" height="2" fill="#222" />
<rect x="535" y="530" width="1" height="2" fill="#222" />
<rect x="547" y="530" width="1" height="2" fill="#222" />
<rect x="621" y="530" width="1" height="2" fill="#222" />
<rect x="665" y="530" width="1" height="2" fill="#222" />
<rect x="696" y="530" width="1" height="2" fill="#222" />
<text x="368.5" y="551" font-family="Liberation Sans" font-size="10.3" fill="#262650" font-weight="normal" text-anchor="start" textLength="63.4" lengthAdjust="spacingAndGlyphs" stroke="#262650" stroke-width="0.1" >Frequency (Hz)</text>
<rect x="728.5" y="544.5" width="7" height="7" fill="#F8F8F4" stroke="#2A2A2A" stroke-width="1"/>
<path d="M730,548 h5 M732.5,545.5 v5" stroke="#222" stroke-width="1"/>
<rect x="787.5" y="544.5" width="7" height="7" fill="#F4F2EA" stroke="#555" stroke-width="1"/>
<rect x="790" y="547" width="2" height="2" fill="#8080A0" />
<text x="453" y="235" font-family="Liberation Sans" font-size="15.5" fill="#111" font-weight="normal" text-anchor="start" textLength="46.5" lengthAdjust="spacingAndGlyphs" >YES-6</text>
<text x="453" y="253.5" font-family="Liberation Sans" font-size="16" fill="#111" font-weight="normal" text-anchor="start" textLength="159" lengthAdjust="spacingAndGlyphs" >на клем. АС без ПОС</text>
<text x="472" y="272.5" font-family="Liberation Sans" font-size="16" fill="#111" font-weight="normal" text-anchor="start" textLength="155.5" lengthAdjust="spacingAndGlyphs" >40Гц + 60Гц + 100Гц</text>
<text x="692.5" y="147.6" font-family="Liberation Serif" font-size="18" fill="#9A968A" font-weight="bold" text-anchor="start" textLength="9.5" lengthAdjust="spacingAndGlyphs" font-style="italic" >S</text>
<path d="M704.5,143.5 h6 M708,140 l-1.5,7" stroke="#9A968A" stroke-width="0.9"/>
<path d="M700,136 l1.5,-1.5" stroke="#9A968A" stroke-width="0.8"/>
<path d="M51.70,416.40 C52.54,416.32 54.22,416.08 56.75,415.90 C59.28,415.72 64.09,415.72 66.90,415.30 C69.71,414.88 71.92,413.65 73.60,413.40 C75.28,413.15 75.31,413.67 77.00,413.80 C78.69,413.93 81.12,414.75 83.75,414.20 C86.38,413.65 90.31,410.78 92.75,410.50 C95.19,410.22 95.96,413.02 98.40,412.50 C100.84,411.98 105.34,408.25 107.40,407.40 C109.46,406.55 109.25,406.88 110.75,407.40 C112.25,407.92 114.62,411.00 116.40,410.50 C118.18,410.00 119.90,404.92 121.40,404.40 C122.90,403.88 123.98,407.32 125.40,407.40 C126.82,407.48 128.50,405.22 129.90,404.90 C131.30,404.58 132.12,406.11 133.80,405.50 C135.48,404.89 138.13,402.08 140.00,401.25 C141.87,400.42 143.33,400.71 145.00,400.50 C146.67,400.29 147.50,400.75 150.00,400.00 C152.50,399.25 156.38,397.67 160.00,396.00 C163.62,394.33 167.53,392.12 171.70,390.00 C175.87,387.88 180.28,386.92 185.00,383.30 C189.72,379.68 195.42,373.02 200.00,368.30 C204.58,363.58 208.75,360.72 212.50,355.00 C216.25,349.28 219.58,341.33 222.50,334.00 C225.42,326.67 228.32,316.67 230.00,311.00 C231.68,305.33 231.60,304.83 232.60,300.00 C233.60,295.17 235.10,288.67 236.00,282.00 L238.00,260.00 L240.00,240.00 L241.00,217.00 L241.00,195.00 L241.70,171.00 L243.70,159.50 L244.60,172.00 L245.00,195.00 L245.50,217.00 L246.60,240.00 L248.00,260.00 L250.00,282.00 L252.60,300.00 L256.00,315.00 L260.00,327.50 L267.50,350.00 L275.00,370.00 L282.50,385.00 L290.00,397.50 L297.70,405.30 L299.70,400.00 L301.00,410.00 L307.00,415.30 L311.00,421.30 L313.70,418.70 L314.50,418.00 L315.00,416.48 L315.50,413.78 L316.00,408.40 L316.50,395.70 L316.75,382.59 L317.00,360.51 L317.25,329.11 L317.50,310.00 L317.75,330.00 L318.00,362.85 L318.25,385.95 L318.50,399.67 L318.75,407.85 L319.00,412.96 L319.50,418.59 L320.00,421.41 L320.50,423.00 L323.00,425.00 L327.00,428.00 L331.00,432.00 L338.00,434.00 L345.00,435.00 L350.00,438.00 L352.00,444.97 L352.75,439.87 L353.89,440.29 L354.96,439.72 L355.75,439.46 L357.05,441.72 L358.08,437.65 L359.05,441.46 L359.98,442.61 L359.00,440.04 L359.50,437.52 L360.00,432.49 L360.50,420.62 L360.75,408.36 L361.00,387.72 L361.25,358.37 L361.50,340.50 L361.75,358.54 L362.00,388.16 L362.25,408.99 L362.50,421.37 L362.75,428.74 L363.00,433.34 L363.50,438.42 L364.00,440.96 L364.50,439.66 L365.51,443.51 L366.74,440.93 L367.88,443.35 L368.80,439.34 L370.07,442.44 L371.05,443.34 L372.04,442.70 L372.96,440.00 L374.20,438.76 L375.33,441.43 L376.16,439.69 L377.41,443.23 L378.65,439.31 L379.66,444.84 L380.75,439.60 L381.75,440.07 L382.83,443.64 L384.07,442.27 L385.22,443.13 L386.06,441.71 L386.82,437.51 L387.65,440.34 L388.60,440.71 L389.40,440.37 L390.15,441.16 L390.87,440.67 L390.50,440.08 L391.00,438.94 L391.50,436.66 L392.00,431.29 L392.25,425.73 L392.50,416.39 L392.75,403.09 L393.00,395.00 L393.25,403.14 L393.50,416.50 L393.75,425.90 L394.00,431.48 L394.25,434.81 L394.50,436.88 L395.00,439.17 L395.50,440.32 L396.00,440.14 L397.29,439.17 L398.02,439.42 L398.78,442.68 L399.50,437.97 L400.74,441.63 L401.96,440.17 L403.06,438.85 L403.82,437.41 L404.87,441.80 L405.88,443.34 L406.94,444.05 L407.65,439.79 L408.37,440.33 L409.13,439.31 L410.39,439.12 L411.23,439.42 L412.30,441.07 L413.43,440.55 L414.13,439.17 L414.90,440.41 L414.40,440.06 L414.90,438.99 L415.40,436.86 L415.90,431.82 L416.15,426.61 L416.40,417.85 L416.65,405.39 L416.90,397.80 L417.15,405.42 L417.40,417.94 L417.65,426.74 L417.90,431.97 L418.15,435.09 L418.40,437.03 L418.90,439.18 L419.40,440.25 L419.90,439.33 L420.88,439.68 L422.12,442.83 L423.26,438.69 L423.99,441.37 L425.01,440.86 L425.93,441.22 L427.18,439.45 L428.10,435.56 L428.86,439.39 L429.57,443.57 L430.52,439.34 L431.26,440.60 L432.19,441.11 L433.00,440.22 L432.40,440.40 L432.90,439.99 L433.40,439.18 L433.90,437.28 L434.15,435.31 L434.40,431.99 L434.65,427.27 L434.90,424.40 L435.15,427.51 L435.40,432.62 L435.65,436.22 L435.90,438.35 L436.15,439.62 L436.40,440.42 L436.90,441.29 L437.40,441.73 L437.90,439.77 L438.65,440.98 L439.73,438.99 L440.90,439.77 L441.90,439.25 L442.76,441.88 L443.75,443.36 L444.95,439.54 L445.79,439.08 L446.89,440.48 L447.95,440.69 L449.24,439.67 L450.19,441.02 L451.49,440.65 L452.26,439.99 L453.37,441.52 L454.39,441.95 L455.54,441.70 L456.55,440.04 L457.53,439.03 L458.47,443.27 L459.26,440.21 L459.97,437.39 L460.98,438.31 L461.92,439.30 L462.91,436.40 L463.81,440.20 L465.02,437.77 L466.09,438.19 L467.17,438.30 L468.30,442.06 L469.01,438.58 L470.15,437.33 L470.91,437.93 L472.07,441.08 L472.88,442.87 L473.66,438.82 L474.70,439.01 L475.53,437.37 L476.73,440.04 L477.88,437.63 L478.74,440.40 L477.70,439.31 L478.20,438.95 L478.70,438.23 L479.20,436.52 L479.45,434.76 L479.70,431.79 L479.95,427.57 L480.20,425.00 L480.45,427.95 L480.70,432.79 L480.95,436.19 L481.20,438.21 L481.45,439.42 L481.70,440.17 L482.20,441.00 L482.70,441.41 L483.20,441.44 L484.14,442.64 L485.32,440.72 L486.24,439.42 L487.12,442.27 L488.04,440.24 L488.97,436.87 L490.06,441.29 L491.08,440.66 L491.97,439.72 L493.14,439.09 L493.90,438.66 L494.83,436.79 L495.91,439.41 L496.75,438.84 L498.03,440.35 L499.22,438.84 L499.96,441.13 L500.76,438.69 L502.02,440.50 L503.10,441.35 L503.94,439.34 L505.05,438.86 L505.89,441.11 L506.97,437.40 L508.20,441.81 L509.20,438.42 L510.35,436.08 L511.61,440.03 L512.68,435.20 L513.60,439.08 L514.52,440.55 L515.75,441.58 L516.47,443.88 L517.38,442.95 L518.35,438.14 L519.19,440.72 L520.27,438.41 L521.16,440.54 L521.98,439.52 L522.94,439.85 L523.78,441.40 L524.68,437.81 L525.47,441.91 L526.43,439.99 L527.63,438.92 L528.79,438.50 L529.73,438.71 L530.80,438.47 L531.85,442.75 L533.14,443.03 L534.09,439.54 L534.82,444.09 L536.08,443.25 L537.33,441.03 L538.04,440.42 L538.95,440.18 L539.70,440.58 L540.79,443.18 L541.78,440.84 L542.56,439.11 L543.81,439.69 L544.83,438.25 L545.82,436.53 L546.59,440.59 L547.42,440.41 L548.50,441.99 L549.50,436.80 L550.30,442.13 L551.12,441.58 L552.00,438.01 L553.18,440.39 L554.22,438.26 L555.51,439.86 L556.63,435.17 L557.45,437.24 L558.50,438.14 L559.62,437.71 L560.35,440.03 L561.41,433.86 L562.18,438.17 L563.45,437.96 L564.69,438.18 L565.88,439.86 L566.75,441.34 L567.70,438.26 L568.67,439.06 L569.54,438.79 L570.36,438.46 L571.38,441.34 L572.20,439.86 L573.17,436.91 L574.08,438.20 L575.06,439.70 L576.04,438.16 L577.11,438.82 L577.94,437.60 L579.05,437.80 L579.87,435.58 L580.69,438.22 L581.58,439.33 L582.55,442.15 L583.75,441.64 L584.54,439.67 L585.46,441.49 L586.55,440.30 L587.73,440.23 L589.01,438.89 L589.83,438.38 L590.95,436.05 L591.79,439.50 L592.58,439.95 L593.51,435.20 L594.50,441.11 L595.33,439.68 L596.08,441.40 L597.19,441.84 L598.19,440.20 L599.20,436.36 L600.32,438.93 L601.16,441.21 L601.94,439.59 L601.50,439.51 L602.00,439.39 L602.50,439.17 L603.00,438.63 L603.25,438.07 L603.50,437.14 L603.75,435.81 L604.00,435.00 L604.25,435.94 L604.50,437.47 L604.75,438.56 L605.00,439.20 L605.25,439.58 L605.50,439.82 L606.00,440.08 L606.50,440.22 L607.00,439.99 L607.75,438.97 L608.71,440.18 L609.70,440.37 L610.61,437.17 L611.38,442.47 L612.29,441.50 L613.53,438.43 L614.81,440.73 L615.52,439.44 L616.82,438.46 L617.84,435.87 L618.80,436.54 L619.53,440.63 L620.81,440.34 L622.05,436.90 L622.90,440.00 L624.14,435.63 L625.20,440.26 L625.91,439.63 L626.91,438.64 L627.92,441.53 L628.86,439.86 L629.83,438.64 L631.12,437.24 L632.08,438.18 L633.26,438.46 L634.04,438.26 L634.75,437.76 L635.79,434.55 L636.76,437.31 L637.59,439.43 L638.86,437.15 L640.07,436.89 L641.09,436.66 L642.22,437.92 L643.43,436.56 L644.45,439.59 L645.72,439.04 L646.96,437.20 L648.05,439.79 L649.13,438.74 L650.41,440.61 L651.56,438.60 L652.48,439.40 L653.58,437.42 L654.53,433.87 L655.47,438.95 L656.51,436.88 L657.75,440.28 L658.85,438.49 L659.62,439.17 L660.54,436.69 L661.74,437.18 L662.49,437.47 L663.45,437.85 L664.16,440.80 L664.89,439.22 L665.88,442.45 L666.96,436.12 L667.80,438.05 L669.00,438.15 L670.13,437.47 L671.18,439.10 L672.38,439.86 L673.57,438.66 L672.50,438.95 L673.00,438.82 L673.50,438.57 L674.00,437.98 L674.25,437.37 L674.50,436.35 L674.75,434.89 L675.00,434.00 L675.25,434.81 L675.50,436.13 L675.75,437.06 L676.00,437.61 L676.25,437.94 L676.50,438.15 L677.00,438.38 L677.50,438.49 L678.00,440.23 L678.80,437.03 L679.78,438.05 L680.90,439.55 L682.11,436.47 L682.93,436.73 L683.63,441.27 L684.45,440.19 L685.65,442.18 L686.69,438.92 L687.46,439.71 L688.69,438.41 L689.97,439.56 L690.71,439.03 L691.73,434.41 L692.55,437.32 L693.33,437.02 L694.05,437.66 L695.22,439.33 L696.30,439.63 L697.39,439.20 L698.11,437.81 L698.87,438.92 L700.15,436.61 L701.22,436.05 L702.04,442.02 L702.75,440.99 L703.97,438.84 L704.75,438.20 L705.74,433.78 L706.48,435.49 L707.67,435.47 L708.58,439.10 L709.62,437.72 L710.64,441.84 L711.81,440.60 L712.71,439.43 L713.66,439.09" fill="none" stroke="#2E9A2E" stroke-width="1.0" stroke-linejoin="round"/>
<path d="M51.70,409.70 L52.25,399.60 L63.50,399.60 L66.90,397.60 L75.90,397.60 L81.50,395.00 L87.10,395.00 L92.75,390.00 C94.82,389.25 97.29,390.95 99.50,390.50 C101.71,390.05 103.75,388.05 106.00,387.30 C108.25,386.55 110.33,387.05 113.00,386.00 C115.67,384.95 119.83,382.00 122.00,381.00 C124.17,380.00 124.67,380.72 126.00,380.00 C127.33,379.28 128.50,377.58 130.00,376.70 C131.50,375.82 132.83,376.07 135.00,374.70 C137.17,373.33 140.50,370.28 143.00,368.50 C145.50,366.72 147.50,366.25 150.00,364.00 C152.50,361.75 155.00,358.45 158.00,355.00 C161.00,351.55 166.00,345.80 168.00,343.30 C170.00,340.80 168.42,342.77 170.00,340.00 C171.58,337.23 175.50,331.03 177.50,326.70 C179.50,322.37 180.47,318.45 182.00,314.00 C183.53,309.55 185.32,305.33 186.70,300.00 C188.08,294.67 189.20,288.67 190.30,282.00 C191.40,275.33 192.57,265.33 193.30,260.00 C194.03,254.67 194.33,253.33 194.70,250.00 C195.07,246.67 195.20,245.50 195.50,240.00 C195.80,234.50 196.17,223.67 196.50,217.00 C196.83,210.33 197.08,207.00 197.50,200.00 C197.92,193.00 198.63,180.83 199.00,175.00 C199.37,169.17 199.45,167.45 199.70,165.00 C199.95,162.55 200.20,160.30 200.50,160.30 C200.80,160.30 201.17,162.55 201.50,165.00 C201.83,167.45 202.25,169.17 202.50,175.00 C202.75,180.83 202.75,193.00 203.00,200.00 C203.25,207.00 203.75,210.33 204.00,217.00 C204.25,223.67 204.20,234.50 204.50,240.00 C204.80,245.50 205.43,246.67 205.80,250.00 C206.17,253.33 206.05,254.67 206.70,260.00 C207.35,265.33 208.73,275.33 209.70,282.00 C210.67,288.67 211.78,296.33 212.50,300.00 C213.22,303.67 213.03,299.83 214.00,304.00 C214.97,308.17 217.13,319.83 218.30,325.00 C219.47,330.17 220.05,332.50 221.00,335.00 C221.95,337.50 222.50,337.08 224.00,340.00 C225.50,342.92 227.54,347.50 230.00,352.50 C232.46,357.50 236.25,365.62 238.75,370.00 C241.25,374.38 242.71,376.08 245.00,378.75 C247.29,381.42 250.83,384.68 252.50,386.00 C254.17,387.32 254.25,386.20 255.00,386.70 C255.75,387.20 256.17,388.12 257.00,389.00 C257.83,389.88 259.00,390.83 260.00,392.00 C261.00,393.17 262.00,395.45 263.00,396.00 C264.00,396.55 265.17,395.30 266.00,395.30 C266.83,395.30 267.21,395.88 268.00,396.00 L270.75,396.00 L271.25,394.53 L271.75,391.94 L272.25,386.76 L272.75,374.53 L273.00,361.90 L273.25,340.64 L273.50,310.41 L273.75,292.00 L274.00,308.81 L274.25,336.43 L274.50,355.85 L274.75,367.39 L275.00,374.27 L275.25,378.56 L275.75,383.29 L276.25,385.66 L276.75,387.00 L279.00,387.00 L281.00,402.70 L284.00,401.00 L287.00,404.00 L290.30,409.30 L293.70,404.70 L295.00,417.30 L297.00,412.00 L300.30,411.30 L302.30,418.70 L306.30,414.70 L309.70,423.30 L312.30,422.70 L314.30,418.70 L315.75,418.00 L316.25,416.33 L316.75,413.37 L317.25,407.47 L317.75,393.54 L318.00,379.15 L318.25,354.92 L318.50,320.47 L318.75,299.50 L319.00,316.76 L319.25,345.10 L319.50,365.03 L319.75,376.87 L320.00,383.93 L320.25,388.33 L320.75,393.19 L321.25,395.62 L321.75,397.00 L321.70,397.30 L323.00,422.70 L325.70,434.70 L327.70,428.00 L331.00,430.70 L333.70,437.30 L336.00,433.00 L338.00,438.00 L340.00,436.00 L343.00,441.00 L345.00,437.00 L347.00,443.19 L347.85,443.46 L347.00,441.30 L347.50,438.40 L348.00,432.60 L348.50,418.91 L348.75,404.77 L349.00,380.96 L349.25,347.11 L349.50,326.50 L349.75,347.30 L350.00,381.47 L350.25,405.49 L350.50,419.76 L350.75,428.27 L351.00,433.58 L351.50,439.43 L352.00,442.37 L352.50,441.34 L353.46,441.23 L354.16,438.44 L355.43,441.91 L356.15,443.10 L357.08,441.34 L358.03,442.18 L359.03,441.22 L359.86,441.37 L360.58,442.85 L361.61,440.31 L362.83,440.13 L363.73,440.50 L364.68,438.33 L365.78,440.21 L366.99,443.09 L368.04,442.18 L368.99,441.21 L370.02,440.19 L370.98,438.49 L372.15,439.23 L371.25,439.99 L371.75,438.09 L372.25,434.30 L372.75,425.36 L373.00,416.13 L373.25,400.57 L373.50,378.46 L373.75,365.00 L374.00,378.83 L374.25,401.53 L374.50,417.50 L374.75,426.99 L375.00,432.64 L375.25,436.17 L375.75,440.06 L376.25,442.01 L376.75,440.66 L377.81,440.06 L379.10,441.51 L380.12,441.65 L381.39,439.90 L382.37,440.58 L383.07,442.96 L384.26,442.94 L385.27,438.99 L386.23,444.04 L387.05,442.00 L388.04,439.83 L389.11,442.02 L390.09,442.00 L391.14,440.99 L392.32,441.68 L391.25,441.11 L391.75,439.37 L392.25,435.90 L392.75,427.72 L393.00,419.27 L393.25,405.05 L393.50,384.82 L393.75,372.50 L394.00,384.62 L394.25,404.53 L394.50,418.53 L394.75,426.84 L395.00,431.80 L395.25,434.89 L395.75,438.30 L396.25,440.01 L396.75,435.70 L397.90,440.73 L398.81,441.54 L399.61,439.70 L400.73,440.54 L401.63,440.34 L402.58,440.76 L403.34,442.34 L404.41,439.49 L405.12,441.63 L405.92,440.78 L407.02,439.51 L407.00,440.68 L407.50,439.27 L408.00,436.46 L408.50,429.82 L408.75,422.96 L409.00,411.42 L409.25,395.00 L409.50,385.00 L409.75,394.93 L410.00,411.24 L410.25,422.72 L410.50,429.53 L410.75,433.59 L411.00,436.12 L411.50,438.92 L412.00,440.32 L412.50,440.30 L413.44,439.29 L414.17,439.93 L415.45,441.64 L416.34,439.58 L417.49,434.84 L418.21,441.24 L419.49,439.64 L420.77,440.13 L421.78,439.43 L421.50,440.41 L422.00,439.80 L422.50,438.56 L423.00,435.65 L423.25,432.64 L423.50,427.58 L423.75,420.38 L424.00,416.00 L424.25,420.33 L424.50,427.45 L424.75,432.45 L425.00,435.42 L425.25,437.19 L425.50,438.30 L426.00,439.52 L426.50,440.13 L427.00,441.62 L428.10,439.95 L429.32,442.43 L430.03,440.97 L431.20,441.94 L432.03,439.01 L432.94,437.60 L434.05,435.55 L435.18,440.95 L434.70,441.28 L435.20,440.36 L435.70,438.53 L436.20,434.20 L436.45,429.73 L436.70,422.21 L436.95,411.51 L437.20,405.00 L437.45,411.30 L437.70,421.65 L437.95,428.93 L438.20,433.25 L438.45,435.82 L438.70,437.43 L439.20,439.21 L439.70,440.09 L440.20,440.57 L441.12,438.13 L442.00,441.98 L443.23,438.70 L444.26,440.79 L445.48,440.69 L446.68,439.12 L447.60,442.36 L448.44,441.54 L449.48,441.03 L450.45,439.85 L451.16,443.30 L451.91,443.00 L452.76,442.69 L453.71,441.11 L454.86,441.01 L456.10,437.07 L456.98,443.44 L456.20,439.50 L456.70,439.16 L457.20,438.48 L457.70,436.87 L457.95,435.21 L458.20,432.41 L458.45,428.42 L458.70,426.00 L458.95,428.74 L459.20,433.24 L459.45,436.40 L459.70,438.28 L459.95,439.40 L460.20,440.10 L460.70,440.87 L461.20,441.26 L459.50,439.36 L460.00,438.89 L460.50,437.94 L461.00,435.72 L461.25,433.42 L461.50,429.55 L461.75,424.05 L462.00,420.70 L462.25,424.04 L462.50,429.53 L462.75,433.39 L463.00,435.68 L463.25,437.05 L463.50,437.90 L464.00,438.84 L464.50,439.31 L465.00,441.67 L465.97,440.10 L466.71,444.09 L467.47,437.91 L468.55,442.34 L469.64,439.96 L470.67,439.77 L471.54,441.41 L472.50,438.80 L473.44,438.21 L474.34,438.85 L475.22,443.20 L476.24,438.17 L476.96,439.08 L477.70,439.55 L478.78,439.95 L479.96,436.77 L480.96,440.29 L481.70,441.14 L482.99,439.80 L483.89,441.72 L484.76,441.39 L485.55,440.48 L486.79,439.87 L488.03,441.61 L488.84,437.72 L489.63,439.53 L490.37,437.62 L491.56,438.05 L492.53,439.42 L493.43,440.04 L494.38,440.43 L495.12,439.48 L495.98,440.77 L496.91,438.13 L497.62,441.39 L498.62,438.94 L499.76,438.54 L499.00,439.96 L499.50,439.63 L500.00,438.98 L500.50,437.43 L500.75,435.83 L501.00,433.15 L501.25,429.33 L501.50,427.00 L501.75,429.28 L502.00,433.01 L502.25,435.64 L502.50,437.20 L502.75,438.13 L503.00,438.71 L503.50,439.36 L504.00,439.68 L504.50,438.12 L505.75,441.11 L506.84,440.59 L508.06,440.15 L509.22,441.04 L510.43,438.95 L509.50,440.40 L510.00,440.19 L510.50,439.76 L511.00,438.76 L511.25,437.73 L511.50,435.98 L511.75,433.51 L512.00,432.00 L512.25,433.56 L512.50,436.13 L512.75,437.94 L513.00,439.01 L513.25,439.65 L513.50,440.05 L514.00,440.49 L514.50,440.71 L515.00,442.15 L516.04,437.05 L516.89,440.34 L517.62,442.05 L518.75,438.70 L519.89,441.54 L521.18,440.71 L522.43,437.62 L523.21,440.37 L524.33,436.62 L525.59,441.47 L526.55,439.52 L527.44,442.43 L528.21,442.47 L529.16,440.85 L530.31,438.19 L531.27,442.16 L532.47,440.10 L533.34,438.47 L534.19,439.41 L535.37,441.41 L536.36,435.48 L537.53,438.24 L538.29,439.02 L539.06,439.70 L540.22,437.59 L541.00,437.51 L542.00,439.71 L543.02,441.54 L543.90,439.71 L545.07,438.89 L546.00,437.88 L546.70,439.29 L547.90,441.93 L549.19,436.53 L550.34,440.43 L551.22,440.78 L552.14,438.55 L553.09,436.84 L554.23,441.52 L555.38,436.81 L556.47,439.74 L557.41,437.95 L558.58,437.85 L559.74,440.51 L560.60,437.46 L561.83,438.64 L562.82,439.30 L563.54,436.76 L564.46,439.37 L565.17,435.45 L566.11,439.36 L567.17,439.83 L568.04,440.65 L569.23,437.91 L570.38,439.28 L571.47,438.80 L572.53,436.46 L573.57,440.90 L574.47,442.14 L575.75,433.90 L576.82,436.31 L577.78,439.68 L578.85,436.48 L580.14,435.92 L581.20,440.74 L582.22,440.03 L583.13,440.13 L583.98,438.88 L584.74,436.76 L585.74,440.29 L586.80,440.04 L587.63,441.98 L588.90,439.96 L589.81,439.82 L590.57,438.65 L591.56,438.62 L592.76,440.07 L593.80,439.99 L594.86,441.96 L596.16,442.24 L597.05,440.20 L598.10,440.82 L599.25,438.47 L600.50,440.25 L601.23,439.39 L602.01,436.12 L602.73,440.04 L603.94,440.59 L604.69,435.72 L605.84,437.99 L606.77,436.23 L608.06,438.45 L609.32,438.25 L610.23,437.51 L610.96,437.89 L611.91,440.32 L613.01,442.54 L614.15,438.69 L615.44,436.40 L616.69,441.22 L617.45,436.55 L618.43,435.80 L619.45,442.75 L620.22,437.05 L620.94,440.79 L621.69,436.22 L622.83,438.46 L623.61,439.99 L624.49,436.17 L625.34,437.70 L626.51,438.58 L627.56,441.07 L628.85,440.61 L630.05,438.46 L631.25,437.08 L632.05,437.66 L632.95,440.57 L633.68,440.05 L634.56,436.80 L635.45,439.04 L636.24,437.04 L637.14,438.74 L638.13,439.60 L639.38,442.10 L640.64,438.43 L641.42,436.81 L642.59,438.67 L643.74,436.38 L644.68,442.09 L645.96,437.97 L647.08,438.77 L648.32,439.66 L649.05,440.56 L650.08,438.87 L651.16,439.75 L651.91,441.91 L652.71,440.40 L653.42,436.70 L654.29,441.35 L655.35,441.30 L656.46,436.22 L657.72,439.71 L659.02,436.28 L659.84,438.82 L660.84,435.96 L662.07,439.51 L663.28,436.70 L664.09,435.70 L664.97,441.33 L666.12,440.93 L667.15,438.44 L668.18,440.58 L669.25,434.99 L670.13,436.55 L671.42,438.71 L672.50,441.57 L673.42,438.69 L674.69,440.78 L675.94,437.22 L676.87,435.81 L678.02,439.43 L678.92,437.93 L679.87,436.46 L680.73,440.16 L682.03,436.96 L683.03,438.55 L684.20,436.11 L685.33,434.17 L686.08,438.94 L687.36,438.74 L688.35,439.07 L689.29,438.14 L690.36,435.49 L691.39,437.13 L692.67,438.31 L693.70,436.42 L694.56,439.86 L695.55,439.53 L696.66,435.39 L697.59,437.92 L698.83,437.37 L700.04,439.92 L700.87,439.63 L701.82,442.62 L702.81,435.16 L703.84,439.20 L704.83,436.40 L705.92,442.55 L706.95,436.54 L708.10,439.21 L709.23,437.51 L710.01,439.26 L711.28,440.57 L712.35,439.55 L713.46,439.92" fill="none" stroke="#3C3CF5" stroke-width="1.0" stroke-linejoin="round"/>
<path d="M51.70,425.60 C51.73,427.00 51.06,432.40 51.90,434.00 C52.74,435.60 55.00,435.10 56.75,435.20 C58.50,435.30 60.15,435.42 62.40,434.60 C64.65,433.78 68.00,430.48 70.25,430.30 C72.50,430.12 73.94,432.32 75.90,433.50 C77.86,434.68 80.03,437.25 82.00,437.40 C83.97,437.55 84.97,434.90 87.70,434.40 C90.43,433.90 95.87,434.27 98.40,434.40 C100.93,434.53 101.22,435.25 102.90,435.20 C104.58,435.15 106.82,433.73 108.50,434.10 C110.18,434.47 111.50,436.85 113.00,437.40 C114.50,437.95 116.18,437.77 117.50,437.40 C118.82,437.03 119.40,435.20 120.90,435.20 C122.40,435.20 124.53,436.00 126.50,437.40 C128.47,438.80 130.63,444.83 132.70,443.60 C134.77,442.37 137.52,432.27 138.90,430.00 C140.28,427.73 139.15,428.30 141.00,430.00 C142.85,431.70 147.25,439.45 150.00,440.20 C152.75,440.95 155.38,434.40 157.50,434.50 C159.62,434.60 160.62,441.30 162.75,440.80 C164.88,440.30 168.00,431.60 170.25,431.50 C172.50,431.40 174.50,438.90 176.25,440.20 C178.00,441.50 179.38,440.70 180.75,439.30 C182.12,437.90 182.88,432.10 184.50,431.80 C186.12,431.50 188.50,437.00 190.50,437.50 C192.50,438.00 194.38,434.50 196.50,434.80 C198.62,435.10 201.62,439.30 203.25,439.30 C204.88,439.30 205.25,435.05 206.25,434.80 C207.25,434.55 207.88,438.23 209.25,437.80 C210.62,437.38 212.62,433.00 214.50,432.25 C216.38,431.50 219.12,433.18 220.50,433.30 C221.88,433.43 222.12,439.22 222.75,433.00 L224.25,396.00 L225.50,400.00 L226.80,415.00 L228.00,428.50 L229.50,430.00 L234.00,427.00 L240.00,425.50 L242.50,424.00 L252.50,417.50 L262.50,410.00 L272.50,397.50 L280.00,380.00 L287.50,360.00 L293.75,332.50 L296.00,310.00 L297.00,304.00 L299.00,282.00 L300.00,250.00 L301.30,217.00 L302.30,175.00 L303.10,161.20 L304.30,175.00 L305.00,217.00 L306.00,250.00 L307.50,282.00 L309.00,304.00 L310.00,310.00 L311.25,330.00 L316.25,355.00 L322.50,380.00 L326.00,390.00 L332.50,405.00 L337.50,410.60 L345.00,425.00 L347.00,431.00 L354.00,437.00 L358.00,440.00 L360.00,441.16 L361.06,443.12 L361.80,444.22 L362.64,441.25 L363.62,441.97 L364.41,439.31 L365.64,438.19 L366.37,440.55 L367.43,440.81 L368.41,441.35 L369.64,440.08 L370.82,437.19 L372.08,441.47 L372.91,440.38 L373.87,439.90 L374.80,439.87 L375.86,437.71 L377.11,439.02 L376.00,441.21 L376.50,437.79 L377.00,430.96 L377.50,414.83 L377.75,398.18 L378.00,370.14 L378.25,330.27 L378.50,306.00 L378.75,330.12 L379.00,369.74 L379.25,397.60 L379.50,414.15 L379.75,424.01 L380.00,430.17 L380.50,436.96 L381.00,440.36 L381.50,443.66 L382.54,437.47 L383.37,441.92 L384.11,438.90 L385.40,443.41 L386.19,442.43 L387.35,441.16 L388.08,440.44 L388.98,444.29 L390.28,437.54 L391.02,440.43 L391.97,440.52 L392.76,444.07 L394.04,441.66 L394.96,438.76 L396.02,441.25 L397.09,442.62 L398.22,439.99 L399.11,442.77 L399.81,440.43 L400.86,443.04 L401.60,441.00 L402.58,440.02 L403.72,437.08 L404.82,441.94 L405.88,440.38 L406.80,440.04 L407.68,442.17 L408.84,442.83 L409.73,441.02 L410.91,440.72 L412.03,441.72 L412.92,439.01 L414.14,443.40 L415.04,438.54 L415.87,437.74 L416.89,441.72 L417.70,443.46 L418.88,438.65 L419.66,438.18 L419.50,440.10 L420.00,437.77 L420.50,433.10 L421.00,422.08 L421.25,410.70 L421.50,391.54 L421.75,364.29 L422.00,347.70 L422.25,364.38 L422.50,391.77 L422.75,411.04 L423.00,422.48 L423.25,429.30 L423.50,433.55 L424.00,438.25 L424.50,440.60 L425.00,439.00 L426.25,441.42 L426.96,443.81 L427.92,439.30 L429.17,441.00 L430.27,443.27 L431.14,439.84 L432.20,441.52 L433.38,444.01 L434.64,441.50 L435.88,440.22 L436.68,440.33 L437.78,438.72 L438.84,440.17 L439.70,441.69 L440.61,438.95 L441.63,440.85 L442.88,439.46 L444.08,442.80 L444.81,440.51 L445.67,438.64 L446.83,437.92 L447.61,440.83 L446.70,439.54 L447.20,439.20 L447.70,438.52 L448.20,436.90 L448.45,435.23 L448.70,432.42 L448.95,428.43 L449.20,426.00 L449.45,428.67 L449.70,433.06 L449.95,436.14 L450.20,437.97 L450.45,439.07 L450.70,439.75 L451.20,440.50 L451.70,440.88 L450.20,439.98 L450.70,438.53 L451.20,435.66 L451.70,428.86 L451.95,421.84 L452.20,410.03 L452.45,393.23 L452.70,383.00 L452.95,393.28 L453.20,410.18 L453.45,422.06 L453.70,429.11 L453.95,433.32 L454.20,435.94 L454.70,438.84 L455.20,440.29 L455.70,440.78 L456.79,438.94 L457.69,439.48 L458.72,439.95 L459.53,438.67 L460.59,440.63 L461.66,438.65 L462.59,437.63 L463.70,440.33 L464.55,437.71 L465.50,439.67 L466.73,441.76 L467.91,439.60 L468.89,442.46 L470.12,442.40 L471.22,439.99 L472.27,435.60 L473.44,440.92 L474.66,440.40 L475.38,440.66 L474.20,440.85 L474.70,439.62 L475.20,437.17 L475.70,431.38 L475.95,425.40 L476.20,415.33 L476.45,401.02 L476.70,392.30 L476.95,401.23 L477.20,415.89 L477.45,426.21 L477.70,432.33 L477.95,435.98 L478.20,438.26 L478.70,440.77 L479.20,442.03 L479.70,439.43 L480.88,442.97 L482.01,440.79 L483.16,440.68 L484.20,439.88 L485.04,440.67 L486.19,441.27 L487.11,438.84 L487.86,441.05 L489.15,437.68 L490.26,441.55 L491.37,438.13 L492.61,439.85 L493.36,440.01 L494.33,436.26 L493.80,439.57 L494.30,439.23 L494.80,438.54 L495.30,436.92 L495.55,435.25 L495.80,432.44 L496.05,428.44 L496.30,426.00 L496.55,428.45 L496.80,432.47 L497.05,435.30 L497.30,436.97 L497.55,437.98 L497.80,438.60 L498.30,439.29 L498.80,439.63 L499.30,438.75 L500.41,439.25 L501.29,439.52 L502.34,438.31 L503.17,441.91 L503.98,440.26 L504.87,440.12 L505.86,439.03 L506.84,441.56 L507.83,437.24 L509.04,437.71 L510.02,441.56 L510.86,439.42 L510.30,439.41 L510.80,439.17 L511.30,438.69 L511.80,437.57 L512.05,436.41 L512.30,434.46 L512.55,431.69 L512.80,430.00 L513.05,431.70 L513.30,434.50 L513.55,436.47 L513.80,437.64 L514.05,438.34 L514.30,438.77 L514.80,439.25 L515.30,439.49 L515.80,437.40 L516.61,438.95 L517.47,436.66 L518.35,437.45 L519.11,441.15 L519.98,438.48 L520.69,441.62 L521.65,438.70 L522.92,439.95 L523.95,440.84 L524.72,440.76 L525.96,443.15 L527.13,442.14 L528.00,438.70 L528.86,437.59 L530.14,438.82 L531.14,437.93 L532.27,438.83 L533.35,437.80 L534.16,441.68 L535.42,438.18 L536.32,439.33 L537.41,437.49 L538.30,440.03 L539.45,440.31 L540.59,438.88 L539.50,438.80 L540.00,438.53 L540.50,437.98 L541.00,436.69 L541.25,435.36 L541.50,433.12 L541.75,429.94 L542.00,428.00 L542.25,430.20 L542.50,433.80 L542.75,436.34 L543.00,437.84 L543.25,438.74 L543.50,439.30 L544.00,439.92 L544.50,440.23 L545.00,440.73 L546.16,438.75 L547.19,440.89 L548.10,440.15 L548.86,438.99 L550.03,439.50 L550.98,438.58 L552.16,439.62 L553.10,437.36 L554.12,438.59 L555.29,434.74 L556.52,441.20 L557.57,439.08 L558.86,439.04 L559.85,438.27 L560.99,442.50 L561.98,439.62 L562.96,436.79 L564.05,441.52 L565.09,443.02 L566.26,438.63 L566.99,438.75 L568.01,440.49 L568.91,441.32 L570.12,437.61 L571.38,438.92 L572.56,436.77 L573.78,436.85 L574.55,440.59 L575.29,439.79 L576.41,440.43 L577.37,438.61 L578.52,438.29 L579.33,441.64 L580.25,437.84 L581.31,439.46 L582.48,439.55 L583.45,439.81 L584.40,440.51 L585.11,440.20 L585.85,436.72 L586.79,439.24 L587.73,433.97 L588.56,440.99 L589.64,440.46 L590.41,441.97 L591.58,440.24 L592.84,438.95 L594.03,440.57 L594.94,441.48 L595.99,438.67 L596.75,439.55 L597.84,439.73 L598.66,441.22 L599.91,438.99 L600.63,438.52 L601.38,441.48 L602.59,440.56 L603.70,440.39 L604.51,439.10 L605.54,436.51 L606.46,438.20 L607.45,439.88 L608.25,438.82 L609.18,436.96 L609.97,439.15 L611.13,438.87 L611.89,439.48 L613.11,442.48 L614.08,441.41 L615.00,437.53 L615.94,439.96 L616.71,438.97 L617.80,439.21 L618.89,439.71 L619.59,439.73 L620.63,443.57 L621.80,436.78 L622.61,437.32 L623.36,434.62 L624.18,438.40 L624.93,437.95 L626.00,439.38 L627.16,440.20 L628.12,437.98 L629.33,436.51 L630.35,437.35 L631.49,440.47 L632.23,439.81 L633.37,436.89 L634.20,440.21 L635.50,438.13 L636.33,440.60 L637.59,438.53 L638.65,435.61 L639.67,435.42 L640.94,441.04 L642.11,434.13 L642.98,442.23 L643.79,441.24 L644.81,440.53 L645.53,438.94 L646.44,437.61 L647.58,438.78 L648.53,439.73 L649.32,439.17 L650.61,436.32 L651.53,439.72 L652.55,440.18 L653.47,439.77 L654.70,437.81 L655.58,436.66 L656.60,441.98 L657.39,439.99 L658.37,439.25 L659.55,439.34 L660.25,438.82 L661.16,440.90 L662.04,439.54 L663.22,437.71 L664.18,439.50 L665.29,441.48 L666.07,437.22 L667.24,435.63 L668.11,438.65 L668.82,436.56 L669.80,435.98 L671.06,439.71 L672.07,436.67 L672.88,436.65 L673.82,433.94 L674.80,439.39 L675.59,437.01 L676.60,435.94 L677.86,440.50 L678.58,436.83 L679.45,437.77 L680.70,440.76 L681.70,440.24 L682.98,438.02 L683.79,437.83 L684.99,438.16 L686.25,439.93 L687.19,438.51 L688.48,439.56 L689.31,438.89 L690.46,439.32 L691.54,438.73 L692.81,438.49 L693.68,437.31 L694.40,438.78 L695.68,440.91 L696.97,441.53 L698.06,438.97 L698.87,439.05 L700.06,438.98 L701.08,438.21 L701.85,434.71 L702.63,441.79 L703.40,436.31 L704.22,441.59 L705.51,439.83 L706.79,438.39 L707.91,438.41 L709.06,438.86 L710.10,436.47 L711.12,438.99 L711.94,435.24 L712.75,436.30 L713.95,439.16" fill="none" stroke="#1E1E48" stroke-width="1.0" stroke-linejoin="round"/>
<text x="737.7" y="129.5" font-family="Liberation Sans" font-size="10" fill="#262650" font-weight="normal" text-anchor="start" textLength="36.2" lengthAdjust="spacingAndGlyphs" stroke="#262650" stroke-width="0.1" >Overlays</text>
<rect x="738" y="130" width="36" height="1" fill="#262650" />
<text font-family="Liberation Sans" font-size="9.5" fill="#262650" transform="translate(731,145) rotate(-90)" textLength="14" lengthAdjust="spacingAndGlyphs">Set</text>
<text font-family="Liberation Sans" font-size="9.5" fill="#262650" transform="translate(742,145) rotate(-90)" textLength="11" lengthAdjust="spacingAndGlyphs">On</text>
<rect x="721" y="148" width="10" height="11" fill="#F2F0E6" />
<rect x="721" y="158" width="10" height="1" fill="#8A877A" />
<rect x="730" y="148" width="1" height="11" fill="#8A877A" />
<text x="726" y="157" font-family="Liberation Sans" font-size="9.5" fill="#303050" font-weight="normal" text-anchor="middle" stroke="#303050" stroke-width="0.1" >1</text>
<rect x="734" y="149" width="9" height="9" fill="#F7F6F0" />
<rect x="734" y="149" width="9" height="1" fill="#8A877A" />
<rect x="734" y="149" width="1" height="9" fill="#8A877A" />
<rect x="735" y="150" width="8" height="1" fill="#C4C1B4" />
<rect x="735" y="150" width="1" height="8" fill="#C4C1B4" />
<text x="747" y="157.3" font-family="Liberation Sans" font-size="10" fill="#3A3A80" font-weight="normal" text-anchor="start" textLength="38.5" lengthAdjust="spacingAndGlyphs" stroke="#3A3A80" stroke-width="0.1" >Overlay 1</text>
<rect x="721" y="160" width="10" height="11" fill="#F2F0E6" />
<rect x="721" y="170" width="10" height="1" fill="#8A877A" />
<rect x="730" y="160" width="1" height="11" fill="#8A877A" />
<text x="726" y="169" font-family="Liberation Sans" font-size="9.5" fill="#303050" font-weight="normal" text-anchor="middle" stroke="#303050" stroke-width="0.1" >2</text>
<rect x="734" y="161" width="9" height="9" fill="#F7F6F0" />
<rect x="734" y="161" width="9" height="1" fill="#8A877A" />
<rect x="734" y="161" width="1" height="9" fill="#8A877A" />
<rect x="735" y="162" width="8" height="1" fill="#C4C1B4" />
<rect x="735" y="162" width="1" height="8" fill="#C4C1B4" />
<text x="747" y="169.3" font-family="Liberation Sans" font-size="10" fill="#4646FF" font-weight="normal" text-anchor="start" textLength="38.5" lengthAdjust="spacingAndGlyphs" stroke="#4646FF" stroke-width="0.1" >Overlay 2</text>
<rect x="721" y="173" width="10" height="11" fill="#F2F0E6" />
<rect x="721" y="183" width="10" height="1" fill="#8A877A" />
<rect x="730" y="173" width="1" height="11" fill="#8A877A" />
<text x="726" y="182" font-family="Liberation Sans" font-size="9.5" fill="#303050" font-weight="normal" text-anchor="middle" stroke="#303050" stroke-width="0.1" >3</text>
<rect x="734" y="174" width="9" height="9" fill="#F7F6F0" />
<rect x="734" y="174" width="9" height="1" fill="#8A877A" />
<rect x="734" y="174" width="1" height="9" fill="#8A877A" />
<rect x="735" y="175" width="8" height="1" fill="#C4C1B4" />
<rect x="735" y="175" width="1" height="8" fill="#C4C1B4" />
<text x="747" y="182.3" font-family="Liberation Sans" font-size="10" fill="#6A3A2A" font-weight="normal" text-anchor="start" textLength="38.5" lengthAdjust="spacingAndGlyphs" stroke="#6A3A2A" stroke-width="0.1" >Overlay 3</text>
<rect x="721" y="185" width="10" height="11" fill="#F2F0E6" />
<rect x="721" y="195" width="10" height="1" fill="#8A877A" />
<rect x="730" y="185" width="1" height="11" fill="#8A877A" />
<text x="726" y="194" font-family="Liberation Sans" font-size="9.5" fill="#303050" font-weight="normal" text-anchor="middle" stroke="#303050" stroke-width="0.1" >4</text>
<rect x="734" y="186" width="9" height="9" fill="#F7F6F0" />
<rect x="734" y="186" width="9" height="1" fill="#8A877A" />
<rect x="734" y="186" width="1" height="9" fill="#8A877A" />
<rect x="735" y="187" width="8" height="1" fill="#C4C1B4" />
<rect x="735" y="187" width="1" height="8" fill="#C4C1B4" />
<path d="M736.8,190.5 l1.6,2.2 l3.4,-4" fill="none" stroke="#000" stroke-width="1.5"/>
<text x="747" y="194.3" font-family="Liberation Sans" font-size="10" fill="#4646FF" font-weight="normal" text-anchor="start" textLength="38.5" lengthAdjust="spacingAndGlyphs" stroke="#4646FF" stroke-width="0.1" >Overlay 4</text>
<rect x="721" y="198" width="10" height="11" fill="#F2F0E6" />
<rect x="721" y="208" width="10" height="1" fill="#8A877A" />
<rect x="730" y="198" width="1" height="11" fill="#8A877A" />
<text x="726" y="207" font-family="Liberation Sans" font-size="9.5" fill="#303050" font-weight="normal" text-anchor="middle" stroke="#303050" stroke-width="0.1" >5</text>
<rect x="734" y="199" width="9" height="9" fill="#F7F6F0" />
<rect x="734" y="199" width="9" height="1" fill="#8A877A" />
<rect x="734" y="199" width="1" height="9" fill="#8A877A" />
<rect x="735" y="200" width="8" height="1" fill="#C4C1B4" />
<rect x="735" y="200" width="1" height="8" fill="#C4C1B4" />
<path d="M736.8,203.5 l1.6,2.2 l3.4,-4" fill="none" stroke="#000" stroke-width="1.5"/>
<text x="747" y="207.3" font-family="Liberation Sans" font-size="10" fill="#3A9A3A" font-weight="normal" text-anchor="start" textLength="38.5" lengthAdjust="spacingAndGlyphs" stroke="#3A9A3A" stroke-width="0.1" >Overlay 5</text>
<rect x="721" y="210" width="10" height="11" fill="#F2F0E6" />
<rect x="721" y="220" width="10" height="1" fill="#8A877A" />
<rect x="730" y="210" width="1" height="11" fill="#8A877A" />
<text x="726" y="219" font-family="Liberation Sans" font-size="9.5" fill="#303050" font-weight="normal" text-anchor="middle" stroke="#303050" stroke-width="0.1" >6</text>
<rect x="734" y="211" width="9" height="9" fill="#F7F6F0" />
<rect x="734" y="211" width="9" height="1" fill="#8A877A" />
<rect x="734" y="211" width="1" height="9" fill="#8A877A" />
<rect x="735" y="212" width="8" height="1" fill="#C4C1B4" />
<rect x="735" y="212" width="1" height="8" fill="#C4C1B4" />
<path d="M736.8,215.5 l1.6,2.2 l3.4,-4" fill="none" stroke="#000" stroke-width="1.5"/>
<text x="747" y="219.3" font-family="Liberation Sans" font-size="10" fill="#404070" font-weight="normal" text-anchor="start" textLength="38.5" lengthAdjust="spacingAndGlyphs" stroke="#404070" stroke-width="0.1" >Overlay 6</text>
<rect x="721" y="223" width="10" height="11" fill="#F2F0E6" />
<rect x="721" y="233" width="10" height="1" fill="#8A877A" />
<rect x="730" y="223" width="1" height="11" fill="#8A877A" />
<text x="726" y="232" font-family="Liberation Sans" font-size="9.5" fill="#303050" font-weight="normal" text-anchor="middle" stroke="#303050" stroke-width="0.1" >C</text>
<rect x="734" y="224" width="9" height="9" fill="#F7F6F0" />
<rect x="734" y="224" width="9" height="1" fill="#8A877A" />
<rect x="734" y="224" width="1" height="9" fill="#8A877A" />
<rect x="735" y="225" width="8" height="1" fill="#C4C1B4" />
<rect x="735" y="225" width="1" height="8" fill="#C4C1B4" />
<text x="747" y="232.3" font-family="Liberation Sans" font-size="10" fill="#2A2A40" font-weight="normal" text-anchor="start" textLength="47" lengthAdjust="spacingAndGlyphs" stroke="#2A2A40" stroke-width="0.1" >Composite</text>
<rect x="719" y="236" width="50" height="14" fill="#8E8B7E" />
<rect x="719" y="236" width="49" height="13" fill="#FFFFFF" />
<rect x="720" y="237" width="48" height="12" fill="#B5B2A5" />
<rect x="720" y="237" width="47" height="11" fill="#F0EEE4" />
<text x="722" y="246.5" font-family="Liberation Sans" font-size="10.3" fill="#303050" font-weight="normal" text-anchor="start" textLength="38" lengthAdjust="spacingAndGlyphs" stroke="#303050" stroke-width="0.1" >Options...</text>
<rect x="0" y="553" width="800" height="1" fill="#FFFFFF" />
<rect x="4" y="557" width="1" height="14" fill="#ACA899" />
<rect x="4" y="557" width="92" height="1" fill="#ACA899" />
<rect x="4" y="570" width="92" height="1" fill="#FFFFFF" />
<rect x="95" y="557" width="1" height="14" fill="#FFFFFF" />
<text x="7.3" y="567.1" font-family="Liberation Sans" font-size="9.6" fill="#202020" font-weight="normal" text-anchor="start" textLength="35.5" lengthAdjust="spacingAndGlyphs" stroke="#202020" stroke-width="0.1" >Stopped</text>
<rect x="98" y="557" width="1" height="14" fill="#ACA899" />
<rect x="98" y="557" width="78" height="1" fill="#ACA899" />
<rect x="98" y="570" width="78" height="1" fill="#FFFFFF" />
<rect x="175" y="557" width="1" height="14" fill="#FFFFFF" />
<text x="101" y="567.1" font-family="Liberation Sans" font-size="9.6" fill="#202020" font-weight="normal" text-anchor="start" textLength="43.5" lengthAdjust="spacingAndGlyphs" stroke="#202020" stroke-width="0.1" >Real Time</text>
<rect x="178" y="557" width="1" height="14" fill="#ACA899" />
<rect x="178" y="557" width="56" height="1" fill="#ACA899" />
<rect x="178" y="570" width="56" height="1" fill="#FFFFFF" />
<rect x="233" y="557" width="1" height="14" fill="#FFFFFF" />
<text x="181" y="567.1" font-family="Liberation Sans" font-size="9.6" fill="#202020" font-weight="normal" text-anchor="start" textLength="41" lengthAdjust="spacingAndGlyphs" stroke="#202020" stroke-width="0.1" >96000 Hz</text>
<rect x="235" y="557" width="1" height="14" fill="#ACA899" />
<rect x="235" y="557" width="40" height="1" fill="#ACA899" />
<rect x="235" y="570" width="40" height="1" fill="#FFFFFF" />
<rect x="274" y="557" width="1" height="14" fill="#FFFFFF" />
<text x="238.5" y="567.1" font-family="Liberation Sans" font-size="9.6" fill="#202020" font-weight="normal" text-anchor="start" textLength="24.2" lengthAdjust="spacingAndGlyphs" stroke="#202020" stroke-width="0.1" >24 Bit</text>
<rect x="277" y="557" width="1" height="14" fill="#ACA899" />
<rect x="277" y="557" width="40" height="1" fill="#ACA899" />
<rect x="277" y="570" width="40" height="1" fill="#FFFFFF" />
<rect x="316" y="557" width="1" height="14" fill="#FFFFFF" />
<text x="279.8" y="567.1" font-family="Liberation Sans" font-size="9.6" fill="#202020" font-weight="normal" text-anchor="start" textLength="28" lengthAdjust="spacingAndGlyphs" stroke="#202020" stroke-width="0.1" >Stereo</text>
<rect x="319" y="557" width="1" height="14" fill="#ACA899" />
<rect x="319" y="557" width="78" height="1" fill="#ACA899" />
<rect x="319" y="570" width="78" height="1" fill="#FFFFFF" />
<rect x="396" y="557" width="1" height="14" fill="#FFFFFF" />
<text x="321" y="567.1" font-family="Liberation Sans" font-size="9.6" fill="#202020" font-weight="normal" text-anchor="start" textLength="66.5" lengthAdjust="spacingAndGlyphs" stroke="#202020" stroke-width="0.1" >FFT 131072 pts</text>
<rect x="399" y="557" width="1" height="14" fill="#ACA899" />
<rect x="399" y="557" width="57" height="1" fill="#ACA899" />
<rect x="399" y="570" width="57" height="1" fill="#FFFFFF" />
<rect x="455" y="557" width="1" height="14" fill="#FFFFFF" />
<text x="401" y="567.1" font-family="Liberation Sans" font-size="9.6" fill="#202020" font-weight="normal" text-anchor="start" textLength="37.5" lengthAdjust="spacingAndGlyphs" stroke="#202020" stroke-width="0.1" >Hanning</text>
<rect x="458" y="557" width="1" height="14" fill="#ACA899" />
<rect x="0" y="575" width="800" height="1" fill="#FFFFFF" />
<rect x="0" y="576" width="800" height="24" fill="url(#taskg)" />
<path d="M0,576 H67 Q74.5,576 74.5,583 V593 Q74.5,600 67,600 H0 Z" fill="#22782A"/>
<path d="M0,577 H66 Q73,577 73,583.5 V592.5 Q73,599 66,599 H0 Z" fill="url(#startg)"/>
<g transform="translate(9,580)"><path d="M1,2 Q4,0 7,2 L6,8 Q3,6 0,8 Z" fill="#E8532A"/><path d="M8,2 Q11,4 14,2 L13,8 Q10,10 7,8 Z" fill="#5BB54A"/><path d="M0,9 Q3,7 6,9 L5,15 Q2,13 -1,15 Z" fill="#3B7BE8"/><path d="M7,9 Q10,11 13,9 L12,15 Q9,17 6,15 Z" fill="#F6C42C"/></g>
<text x="27" y="593.5" font-family="Liberation Sans" font-size="14" fill="#FFFFFF" font-weight="bold" text-anchor="start" textLength="30" lengthAdjust="spacingAndGlyphs" font-style="italic" >пуск</text>
<rect x="82" y="580" width="125" height="18" rx="2" fill="#1C4FBF"/>
<rect x="90" y="582" width="13" height="13" fill="#F0EEE8" />
<polyline points="91,586 93,584 95,589 97,587 99,591 102,590" fill="none" stroke="#3040D0" stroke-width="1.2"/>
<text x="106" y="592.5" font-family="Liberation Sans" font-size="9.5" fill="#FFFFFF" font-weight="normal" text-anchor="start" textLength="92" lengthAdjust="spacingAndGlyphs" stroke="#FFFFFF" stroke-width="0.1" >SpectraPLUS-SC Sou...</text>
<rect x="208" y="580" width="123" height="18" rx="2" fill="#3B7FF0"/>
<path d="M216,584 l10,0 l-2,10 l-6,0 z" fill="#C8A040"/><path d="M218,586 l4,6" stroke="#C03020" stroke-width="2"/><path d="M221,585 l2,7" stroke="#30A040" stroke-width="1.5"/>
<text x="230" y="592.5" font-family="Liberation Sans" font-size="9.5" fill="#FFFFFF" font-weight="normal" text-anchor="start" textLength="86" lengthAdjust="spacingAndGlyphs" stroke="#FFFFFF" stroke-width="0.1" >40+60+100Гц с ПОС...</text>
<text x="641" y="592" font-family="Liberation Sans" font-size="9.5" fill="#FFFFFF" font-weight="normal" text-anchor="start" textLength="11" lengthAdjust="spacingAndGlyphs" stroke="#FFFFFF" stroke-width="0.1" >RU</text>
<rect x="657.5" y="585.5" width="12" height="7" fill="#F0F0F0" stroke="#202020" stroke-width="1"/>
<path d="M659,588 h9 M659,590.5 h9" stroke="#404040" stroke-width="1" stroke-dasharray="1,1"/>
<path d="M661,585 q1,-2 3,-1 q1,0.5 2,-1" fill="none" stroke="#202020" stroke-width="0.8"/>
<rect x="685" y="576" width="115" height="24" fill="url(#trayg)" />
<rect x="685" y="576" width="1" height="24" fill="#0A5BC0" />
<path d="M695,585 l4,-3.5 v2 h3 v3 h-3 v2 z" fill="#3DBA2C"/>
<path d="M697.5,588.5 l7,-1 l1,4 l-7,1.5 z" fill="#B8B8C0" stroke="#404050" stroke-width="0.8"/>
<rect x="708.5" y="583.5" width="6" height="6" fill="#6A6090" stroke="#303040" stroke-width="0.8"/>
<rect x="712.5" y="581.5" width="6" height="7" fill="#5A5080" stroke="#303040" stroke-width="0.8"/>
<rect x="709" y="590" width="4" height="2" fill="#C8C8D0"/>
<path d="M714,588 l5.5,5.5 M719.5,588 l-5.5,5.5" stroke="#F03020" stroke-width="1.6"/>
<circle cx="729" cy="588" r="5.5" fill="#0A1A2A" stroke="#30B8F0" stroke-width="1.2"/>
<path d="M726.5,590 q0,-4 3,-4 q2.5,0 2.5,3" fill="none" stroke="#9AE0FF" stroke-width="1"/>
<circle cx="741" cy="587" r="4.8" fill="#8C8A84" stroke="#3A3A3A" stroke-width="0.8"/>
<circle cx="741" cy="587" r="1.5" fill="#E0E0E0"/>
<path d="M743,593 l5,-5" stroke="#A8C8F8" stroke-width="1.5"/>
<circle cx="756" cy="588" r="6" fill="#1FA04A"/>
<path d="M752,590 l2,-1 l2,0 l3,-3" fill="none" stroke="#B0F0C0" stroke-width="1"/>
<circle cx="759" cy="591" r="3" fill="#7A2AB8"/><circle cx="759" cy="591" r="1" fill="#fff"/>
<text x="769" y="592" font-family="Liberation Sans" font-size="9.5" fill="#FFFFFF" font-weight="normal" text-anchor="start" textLength="21" lengthAdjust="spacingAndGlyphs" stroke="#FFFFFF" stroke-width="0.1" >17:07</text>
</svg>
</body></html>
